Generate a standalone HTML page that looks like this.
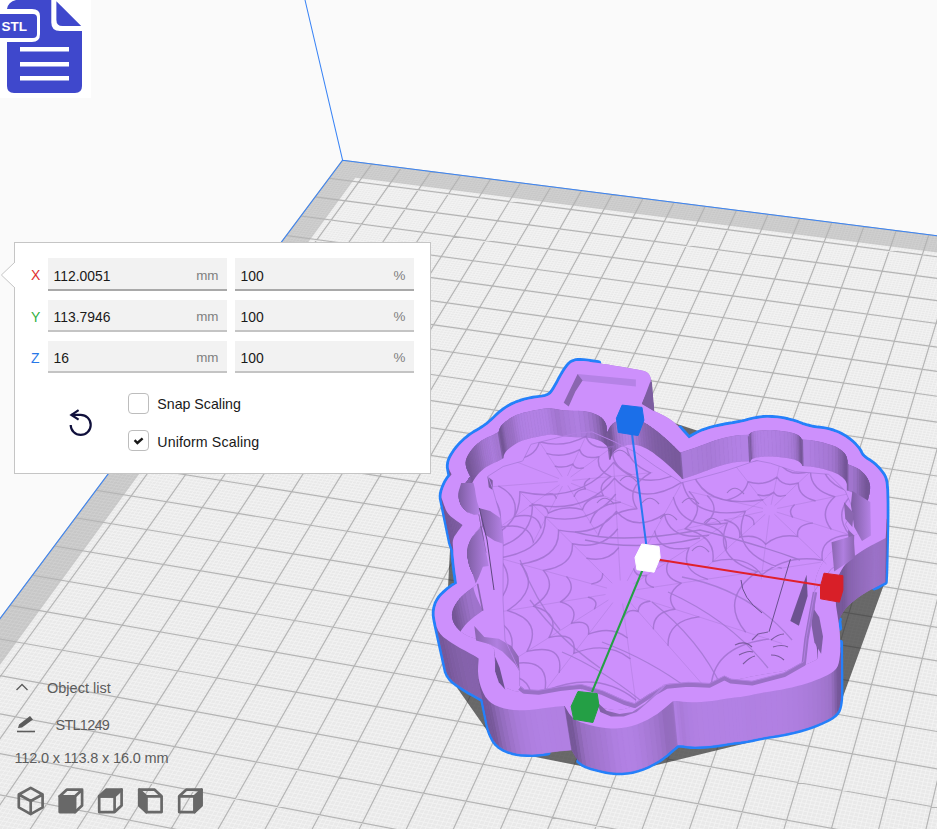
<!DOCTYPE html>
<html><head><meta charset="utf-8"><title>STL1249</title>
<style>
html,body{margin:0;padding:0}
body{width:937px;height:829px;overflow:hidden;background:#fafafa;position:relative;font-family:"Liberation Sans","DejaVu Sans",sans-serif;color:#191919}
#scene{position:absolute;left:0;top:0}
#stl{position:absolute;left:0;top:0;width:91px;height:98px;background:#fff}
#panel{position:absolute;left:14px;top:242px;width:415px;height:230px;background:#fff;border:1px solid #c5c5c5}
#arrow{position:absolute;left:0px;top:261.5px;width:15px;height:26px}
.row{position:absolute;height:33px}
.lbl{position:absolute;left:16px;font-size:14px;width:14px;text-align:left}
.fld{position:absolute;height:30.5px;background:#f2f2f2;border-bottom:2px solid #c4c4c4;font-size:13.9px;line-height:30px}
.fld span.v{position:absolute;left:5.5px;top:2.3px;color:#191919}
.fld span.u{position:absolute;right:8.5px;top:2.3px;color:#808080;font-size:13.4px}
.cb{position:absolute;width:19px;height:19px;border:1px solid #bdbdbd;border-radius:4px;background:#fff}
.cbl{position:absolute;font-size:14.2px;color:#191919;white-space:nowrap}
.ol{position:absolute;font-size:14.5px;color:#5c5c5c;white-space:nowrap}
</style></head>
<body>
<svg id="scene" width="937" height="829" viewBox="0 0 937 829">
<polygon points="342.6,160.2 1299.8,281.8 1218.5,1357.2 -297.2,1016.5" fill="#e9e9e9"/>
<path d="M345.5,160.6L-292.9,1017.5M348.5,161.0L-288.5,1018.5M351.4,161.3L-284.1,1019.5M354.3,161.7L-279.7,1020.5M357.2,162.1L-275.4,1021.5M360.2,162.4L-271.0,1022.4M363.1,162.8L-266.6,1023.4M366.0,163.2L-262.2,1024.4M368.9,163.6L-257.8,1025.4M374.8,164.3L-249.0,1027.4M377.8,164.7L-244.6,1028.4M380.7,165.0L-240.2,1029.4M383.6,165.4L-235.8,1030.4M386.6,165.8L-231.3,1031.4M389.5,166.2L-226.9,1032.3M392.5,166.5L-222.5,1033.3M395.4,166.9L-218.0,1034.3M398.4,167.3L-213.6,1035.3M404.3,168.0L-204.7,1037.3M407.2,168.4L-200.3,1038.3M410.2,168.8L-195.8,1039.3M413.1,169.2L-191.4,1040.3M416.1,169.5L-186.9,1041.3M419.0,169.9L-182.4,1042.3M422.0,170.3L-178.0,1043.3M425.0,170.7L-173.5,1044.4M427.9,171.1L-169.0,1045.4M433.9,171.8L-160.0,1047.4M436.8,172.2L-155.5,1048.4M439.8,172.6L-151.1,1049.4M442.8,172.9L-146.6,1050.4M445.8,173.3L-142.0,1051.4M448.7,173.7L-137.5,1052.4M451.7,174.1L-133.0,1053.4M454.7,174.5L-128.5,1054.5M457.7,174.8L-124.0,1055.5M463.7,175.6L-114.9,1057.5M466.7,176.0L-110.4,1058.5M469.6,176.3L-105.9,1059.5M472.6,176.7L-101.3,1060.6M475.6,177.1L-96.8,1061.6M478.6,177.5L-92.2,1062.6M481.6,177.9L-87.7,1063.6M484.6,178.3L-83.1,1064.7M487.6,178.6L-78.6,1065.7M493.6,179.4L-69.4,1067.7M496.6,179.8L-64.9,1068.8M499.6,180.2L-60.3,1069.8M502.6,180.5L-55.7,1070.8M505.7,180.9L-51.1,1071.9M508.7,181.3L-46.5,1072.9M511.7,181.7L-41.9,1073.9M514.7,182.1L-37.3,1075.0M517.7,182.5L-32.7,1076.0M523.8,183.2L-23.5,1078.1M526.8,183.6L-18.9,1079.1M529.8,184.0L-14.2,1080.1M532.8,184.4L-9.6,1081.2M535.9,184.8L-5.0,1082.2M538.9,185.1L-0.4,1083.3M541.9,185.5L4.3,1084.3M545.0,185.9L8.9,1085.4M548.0,186.3L13.6,1086.4M554.1,187.1L22.9,1088.5M557.1,187.5L27.6,1089.5M560.1,187.8L32.2,1090.6M563.2,188.2L36.9,1091.6M566.2,188.6L41.6,1092.7M569.3,189.0L46.2,1093.7M572.3,189.4L50.9,1094.8M575.4,189.8L55.6,1095.8M578.4,190.2L60.3,1096.9M584.5,190.9L69.7,1099.0M587.6,191.3L74.4,1100.1M590.7,191.7L79.1,1101.1M593.7,192.1L83.8,1102.2M596.8,192.5L88.6,1103.2M599.9,192.9L93.3,1104.3M602.9,193.3L98.0,1105.4M606.0,193.7L102.7,1106.4M609.1,194.1L107.5,1107.5M615.2,194.8L117.0,1109.6M618.3,195.2L121.7,1110.7M621.4,195.6L126.5,1111.8M624.4,196.0L131.2,1112.8M627.5,196.4L136.0,1113.9M630.6,196.8L140.8,1115.0M633.7,197.2L145.5,1116.1M636.8,197.6L150.3,1117.1M639.9,198.0L155.1,1118.2M646.1,198.8L164.7,1120.4M649.2,199.2L169.5,1121.4M652.2,199.5L174.3,1122.5M655.3,199.9L179.1,1123.6M658.4,200.3L183.9,1124.7M661.5,200.7L188.7,1125.8M664.7,201.1L193.5,1126.8M667.8,201.5L198.3,1127.9M670.9,201.9L203.2,1129.0M677.1,202.7L212.8,1131.2M680.2,203.1L217.7,1132.3M683.3,203.5L222.5,1133.4M686.4,203.9L227.4,1134.4M689.5,204.3L232.2,1135.5M692.7,204.7L237.1,1136.6M695.8,205.1L241.9,1137.7M698.9,205.5L246.8,1138.8M702.0,205.9L251.7,1139.9M708.3,206.7L261.5,1142.1M711.4,207.1L266.3,1143.2M714.6,207.5L271.2,1144.3M717.7,207.9L276.1,1145.4M720.8,208.3L281.0,1146.5M724.0,208.7L285.9,1147.6M727.1,209.1L290.9,1148.7M730.2,209.5L295.8,1149.8M733.4,209.9L300.7,1150.9M739.7,210.7L310.6,1153.1M742.8,211.1L315.5,1154.2M746.0,211.5L320.4,1155.4M749.1,211.9L325.4,1156.5M752.3,212.3L330.3,1157.6M755.5,212.7L335.3,1158.7M758.6,213.1L340.2,1159.8M761.8,213.5L345.2,1160.9M764.9,213.9L350.2,1162.0M771.3,214.7L360.1,1164.3M774.4,215.1L365.1,1165.4M777.6,215.5L370.1,1166.5M780.8,215.9L375.1,1167.6M784.0,216.3L380.1,1168.8M787.1,216.7L385.1,1169.9M790.3,217.1L390.1,1171.0M793.5,217.5L395.1,1172.1M796.7,217.9L400.1,1173.3M803.0,218.7L410.2,1175.5M806.2,219.1L415.2,1176.7M809.4,219.5L420.3,1177.8M812.6,219.9L425.3,1178.9M815.8,220.3L430.3,1180.1M819.0,220.7L435.4,1181.2M822.2,221.1L440.5,1182.3M825.4,221.5L445.5,1183.5M828.6,222.0L450.6,1184.6M835.0,222.8L460.7,1186.9M838.2,223.2L465.8,1188.0M841.4,223.6L470.9,1189.2M844.6,224.0L476.0,1190.3M847.8,224.4L481.1,1191.5M851.0,224.8L486.2,1192.6M854.3,225.2L491.3,1193.8M857.5,225.6L496.4,1194.9M860.7,226.0L501.5,1196.1M867.1,226.8L511.8,1198.4M870.4,227.3L516.9,1199.5M873.6,227.7L522.0,1200.7M876.8,228.1L527.2,1201.8M880.1,228.5L532.3,1203.0M883.3,228.9L537.5,1204.1M886.5,229.3L542.6,1205.3M889.8,229.7L547.8,1206.5M893.0,230.1L553.0,1207.6M899.5,231.0L563.3,1210.0M902.7,231.4L568.5,1211.1M906.0,231.8L573.7,1212.3M909.2,232.2L578.9,1213.5M912.5,232.6L584.1,1214.6M915.7,233.0L589.3,1215.8M919.0,233.4L594.5,1217.0M922.2,233.8L599.7,1218.1M925.5,234.3L604.9,1219.3M932.0,235.1L615.4,1221.7M935.3,235.5L620.6,1222.8M938.6,235.9L625.9,1224.0M941.8,236.3L631.1,1225.2M945.1,236.8L636.4,1226.4M948.4,237.2L641.6,1227.6M951.6,237.6L646.9,1228.7M954.9,238.0L652.2,1229.9M958.2,238.4L657.4,1231.1M964.8,239.3L668.0,1233.5M968.0,239.7L673.3,1234.7M971.3,240.1L678.6,1235.9M974.6,240.5L683.9,1237.0M977.9,240.9L689.2,1238.2M981.2,241.3L694.5,1239.4M984.5,241.8L699.8,1240.6M987.8,242.2L705.1,1241.8M991.1,242.6L710.4,1243.0M997.7,243.4L721.1,1245.4M1001.0,243.9L726.4,1246.6M1004.3,244.3L731.8,1247.8M1007.6,244.7L737.1,1249.0M1010.9,245.1L742.5,1250.2M1014.2,245.5L747.9,1251.4M1017.5,246.0L753.2,1252.6M1020.9,246.4L758.6,1253.8M1024.2,246.8L764.0,1255.1M1030.8,247.6L774.8,1257.5M1034.1,248.1L780.2,1258.7M1037.5,248.5L785.6,1259.9M1040.8,248.9L791.0,1261.1M1044.1,249.3L796.4,1262.3M1047.5,249.8L801.8,1263.5M1050.8,250.2L807.2,1264.8M1054.1,250.6L812.6,1266.0M1057.5,251.0L818.1,1267.2M1064.2,251.9L829.0,1269.7M1067.5,252.3L834.4,1270.9M1070.9,252.7L839.9,1272.1M1074.2,253.2L845.3,1273.3M1077.6,253.6L850.8,1274.6M1080.9,254.0L856.3,1275.8M1084.3,254.4L861.7,1277.0M1087.6,254.9L867.2,1278.3M1091.0,255.3L872.7,1279.5M1097.7,256.1L883.7,1282.0M1101.1,256.6L889.2,1283.2M1104.4,257.0L894.7,1284.4M1107.8,257.4L900.2,1285.7M1111.2,257.9L905.8,1286.9M1114.5,258.3L911.3,1288.2M1117.9,258.7L916.8,1289.4M1121.3,259.1L922.4,1290.6M1124.7,259.6L927.9,1291.9M1131.4,260.4L939.0,1294.4M1134.8,260.9L944.6,1295.6M1138.2,261.3L950.2,1296.9M1141.6,261.7L955.7,1298.1M1145.0,262.1L961.3,1299.4M1148.4,262.6L966.9,1300.7M1151.8,263.0L972.5,1301.9M1155.2,263.4L978.1,1303.2M1158.6,263.9L983.7,1304.4M341.3,162.0L1299.7,283.9M339.9,163.8L1299.5,286.1M338.6,165.6L1299.4,288.2M337.2,167.4L1299.2,290.4M335.9,169.2L1299.0,292.5M334.5,171.0L1298.9,294.7M333.2,172.8L1298.7,296.8M331.8,174.7L1298.5,299.0M330.4,176.5L1298.4,301.2M327.7,180.2L1298.0,305.5M326.3,182.0L1297.9,307.7M324.9,183.9L1297.7,309.9M323.6,185.7L1297.6,312.1M322.2,187.6L1297.4,314.3M320.8,189.4L1297.2,316.5M319.4,191.3L1297.0,318.8M318.0,193.2L1296.9,321.0M316.6,195.0L1296.7,323.2M313.8,198.8L1296.4,327.7M312.4,200.7L1296.2,330.0M311.0,202.6L1296.0,332.2M309.5,204.5L1295.9,334.5M308.1,206.4L1295.7,336.7M306.7,208.3L1295.5,339.0M305.3,210.2L1295.3,341.3M303.8,212.1L1295.2,343.6M302.4,214.1L1295.0,345.9M299.5,217.9L1294.6,350.5M298.1,219.9L1294.5,352.8M296.6,221.8L1294.3,355.1M295.1,223.7L1294.1,357.5M293.7,225.7L1293.9,359.8M292.2,227.7L1293.8,362.2M290.8,229.6L1293.6,364.5M289.3,231.6L1293.4,366.9M287.8,233.6L1293.2,369.2M284.8,237.5L1292.9,374.0M283.4,239.5L1292.7,376.4M281.9,241.5L1292.5,378.7M280.4,243.5L1292.3,381.1M278.9,245.5L1292.1,383.5M277.4,247.5L1292.0,386.0M275.9,249.5L1291.8,388.4M274.4,251.6L1291.6,390.8M272.8,253.6L1291.4,393.2M269.8,257.7L1291.0,398.1M268.3,259.7L1290.9,400.6M266.7,261.8L1290.7,403.0M265.2,263.8L1290.5,405.5M263.7,265.9L1290.3,408.0M262.1,267.9L1290.1,410.5M260.6,270.0L1289.9,413.0M259.0,272.1L1289.7,415.5M257.5,274.2L1289.5,418.0M254.4,278.3L1289.2,423.0M252.8,280.4L1289.0,425.5M251.2,282.5L1288.8,428.1M249.6,284.6L1288.6,430.6M248.1,286.8L1288.4,433.1M246.5,288.9L1288.2,435.7M244.9,291.0L1288.0,438.3M243.3,293.1L1287.8,440.8M241.7,295.3L1287.6,443.4M238.5,299.6L1287.2,448.6M236.9,301.7L1287.0,451.2M235.3,303.9L1286.8,453.8M233.6,306.1L1286.6,456.4M232.0,308.2L1286.4,459.1M230.4,310.4L1286.2,461.7M228.8,312.6L1286.0,464.3M227.1,314.8L1285.8,467.0M225.5,317.0L1285.6,469.7M222.2,321.4L1285.2,475.0M220.5,323.6L1285.0,477.7M218.9,325.8L1284.8,480.4M217.2,328.1L1284.6,483.1M215.5,330.3L1284.4,485.8M213.8,332.5L1284.2,488.5M212.2,334.8L1284.0,491.2M210.5,337.0L1283.8,494.0M208.8,339.3L1283.6,496.7M205.4,343.8L1283.2,502.2M203.7,346.1L1283.0,505.0M202.0,348.4L1282.7,507.8M200.3,350.7L1282.5,510.6M198.6,353.0L1282.3,513.3M196.8,355.3L1282.1,516.1M195.1,357.6L1281.9,519.0M193.4,359.9L1281.7,521.8M191.7,362.3L1281.5,524.6M188.2,366.9L1281.0,530.3M186.4,369.3L1280.8,533.2M184.7,371.6L1280.6,536.0M182.9,374.0L1280.4,538.9M181.1,376.3L1280.2,541.8M179.4,378.7L1280.0,544.7M177.6,381.1L1279.7,547.6M175.8,383.5L1279.5,550.5M174.0,385.9L1279.3,553.4M170.4,390.7L1278.9,559.3M168.6,393.1L1278.6,562.2M166.8,395.5L1278.4,565.2M165.0,397.9L1278.2,568.1M163.2,400.4L1278.0,571.1M161.4,402.8L1277.7,574.1M159.5,405.2L1277.5,577.1M157.7,407.7L1277.3,580.1M155.9,410.2L1277.0,583.1M152.2,415.1L1276.6,589.2M150.3,417.6L1276.4,592.2M148.4,420.1L1276.1,595.3M146.6,422.6L1275.9,598.4M144.7,425.1L1275.7,601.4M142.8,427.6L1275.4,604.5M140.9,430.1L1275.2,607.6M139.1,432.6L1275.0,610.7M137.2,435.2L1274.7,613.8M133.4,440.3L1274.2,620.1M131.4,442.8L1274.0,623.2M129.5,445.4L1273.8,626.4M127.6,448.0L1273.5,629.6M125.7,450.5L1273.3,632.8M123.7,453.1L1273.1,635.9M121.8,455.7L1272.8,639.1M119.9,458.3L1272.6,642.4M117.9,460.9L1272.3,645.6M114.0,466.2L1271.8,652.0M112.0,468.8L1271.6,655.3M110.0,471.5L1271.3,658.6M108.1,474.1L1271.1,661.8M106.1,476.8L1270.8,665.1M104.1,479.4L1270.6,668.4M102.1,482.1L1270.3,671.7M100.1,484.8L1270.1,675.1M98.1,487.5L1269.8,678.4M94.0,492.9L1269.3,685.1M92.0,495.6L1269.1,688.5M90.0,498.3L1268.8,691.8M87.9,501.1L1268.6,695.2M85.9,503.8L1268.3,698.6M83.8,506.6L1268.1,702.0M81.8,509.3L1267.8,705.5M79.7,512.1L1267.5,708.9M77.6,514.9L1267.3,712.3M73.4,520.5L1266.7,719.3M71.3,523.3L1266.5,722.8M69.2,526.1L1266.2,726.3M67.1,528.9L1266.0,729.8M65.0,531.7L1265.7,733.3M62.9,534.6L1265.4,736.8M60.8,537.4L1265.2,740.4M58.6,540.3L1264.9,743.9M56.5,543.1L1264.6,747.5M52.2,548.9L1264.1,754.7M50.0,551.8L1263.8,758.3M47.9,554.7L1263.5,761.9M45.7,557.6L1263.2,765.6M43.5,560.5L1263.0,769.2M41.3,563.4L1262.7,772.9M39.1,566.4L1262.4,776.5M36.9,569.3L1262.1,780.2M34.7,572.3L1261.9,783.9M30.3,578.2L1261.3,791.4M28.1,581.2L1261.0,795.1M25.8,584.2L1260.7,798.9M23.6,587.2L1260.4,802.6M21.3,590.2L1260.2,806.4M19.1,593.2L1259.9,810.2M16.8,596.3L1259.6,814.0M14.5,599.3L1259.3,817.8M12.2,602.4L1259.0,821.7M7.7,608.5L1258.4,829.4M5.4,611.6L1258.1,833.3M3.0,614.7L1257.8,837.2M0.7,617.8L1257.5,841.1M-1.6,620.9L1257.2,845.0M-3.9,624.0L1256.9,848.9M-6.3,627.1L1256.6,852.9M-8.6,630.3L1256.3,856.9M-11.0,633.4L1256.0,860.8M-15.7,639.8L1255.4,868.8M-18.1,643.0L1255.1,872.9M-20.5,646.2L1254.8,876.9M-22.9,649.4L1254.5,881.0M-25.3,652.6L1254.2,885.0M-27.7,655.8L1253.9,889.1M-30.1,659.1L1253.6,893.2M-32.6,662.3L1253.3,897.4M-35.0,665.6L1253.0,901.5M-39.9,672.1L1252.3,909.8M-42.3,675.4L1252.0,914.0M-44.8,678.7L1251.7,918.2M-47.3,682.0L1251.4,922.4M-49.8,685.4L1251.1,926.6M-52.3,688.7L1250.7,930.9M-54.8,692.1L1250.4,935.1M-57.3,695.4L1250.1,939.4M-59.8,698.8L1249.8,943.7M-64.9,705.6L1249.1,952.4M-67.4,709.0L1248.8,956.7M-70.0,712.4L1248.5,961.1M-72.6,715.8L1248.1,965.4M-75.1,719.3L1247.8,969.8M-77.7,722.7L1247.5,974.3M-80.3,726.2L1247.1,978.7M-82.9,729.7L1246.8,983.1M-85.5,733.2L1246.4,987.6M-90.8,740.2L1245.8,996.6M-93.4,743.7L1245.4,1001.1M-96.0,747.3L1245.1,1005.6M-98.7,750.8L1244.7,1010.2M-101.4,754.4L1244.4,1014.8M-104.0,758.0L1244.0,1019.4M-106.7,761.6L1243.7,1024.0M-109.4,765.2L1243.3,1028.6M-112.1,768.8L1243.0,1033.3M-117.5,776.1L1242.3,1042.6M-120.3,779.7L1241.9,1047.3M-123.0,783.4L1241.6,1052.0M-125.8,787.1L1241.2,1056.8M-128.5,790.8L1240.9,1061.6M-131.3,794.5L1240.5,1066.3M-134.1,798.2L1240.1,1071.1M-136.9,801.9L1239.8,1076.0M-139.7,805.7L1239.4,1080.8M-145.3,813.2L1238.7,1090.5M-148.1,817.0L1238.3,1095.4M-151.0,820.8L1237.9,1100.4M-153.8,824.6L1237.5,1105.3M-156.7,828.4L1237.2,1110.3M-159.6,832.3L1236.8,1115.3M-162.4,836.1L1236.4,1120.3M-165.3,840.0L1236.0,1125.3M-168.2,843.9L1235.6,1130.3M-174.1,851.7L1234.9,1140.5M-177.0,855.7L1234.5,1145.6M-180.0,859.6L1234.1,1150.7M-182.9,863.6L1233.7,1155.9M-185.9,867.5L1233.3,1161.1M-188.9,871.5L1232.9,1166.3M-191.9,875.5L1232.5,1171.5M-194.9,879.5L1232.1,1176.7M-197.9,883.6L1231.7,1182.0" stroke="#f4f4f4" stroke-width="1" fill="none" opacity="0.8"/>
<polygon points="342.6,160.2 1299.8,281.8 1298.5,299.0 355.4,177.7 -262.2,1024.4 -297.2,1016.5" fill="#000" fill-opacity="0.145"/>
<path d="M342.6,160.2L-297.2,1016.5M371.9,163.9L-253.4,1026.4M401.3,167.7L-209.2,1036.3M430.9,171.4L-164.5,1046.4M460.7,175.2L-119.5,1056.5M490.6,179.0L-74.0,1066.7M520.7,182.8L-28.1,1077.0M551.0,186.7L18.2,1087.4M581.5,190.6L65.0,1098.0M612.1,194.5L112.2,1108.6M643.0,198.4L159.9,1119.3M674.0,202.3L208.0,1130.1M705.2,206.3L256.6,1141.0M736.5,210.3L305.6,1152.0M768.1,214.3L355.1,1163.2M799.8,218.3L405.2,1174.4M831.8,222.4L455.7,1185.8M863.9,226.4L506.7,1197.2M896.2,230.5L558.2,1208.8M928.8,234.7L610.2,1220.5M961.5,238.8L662.7,1232.3M994.4,243.0L715.8,1244.2M1027.5,247.2L769.4,1256.3M1060.8,251.5L823.5,1268.4M1094.3,255.7L878.2,1280.7M1128.1,260.0L933.5,1293.1M1162.0,264.3L989.3,1305.7M1196.1,268.6L1045.7,1318.4M1230.5,273.0L1102.7,1331.2M1265.1,277.4L1160.3,1344.1M1299.8,281.8L1218.5,1357.2M342.6,160.2L1299.8,281.8M329.1,178.3L1298.2,303.3M315.2,196.9L1296.5,325.5M300.9,216.0L1294.8,348.2M286.3,235.5L1293.0,371.6M271.3,255.6L1291.2,395.7M255.9,276.2L1289.4,420.5M240.1,297.4L1287.4,446.0M223.8,319.2L1285.4,472.3M207.1,341.6L1283.4,499.5M189.9,364.6L1281.3,527.4M172.2,388.3L1279.1,556.3M154.0,412.6L1276.8,586.2M135.3,437.7L1274.5,617.0M116.0,463.6L1272.1,648.8M96.1,490.2L1269.6,681.7M75.5,517.7L1267.0,715.8M54.4,546.0L1264.3,751.1M32.5,575.2L1261.6,787.6M10.0,605.4L1258.7,825.5M-13.3,636.6L1255.7,864.8M-37.4,668.8L1252.6,905.6M-62.3,702.2L1249.4,948.0M-88.1,736.7L1246.1,992.1M-114.8,772.4L1242.6,1037.9M-142.5,809.4L1239.0,1085.7M-171.2,847.8L1235.3,1135.4M-200.9,887.6L1231.3,1187.3M-231.8,929.0L1227.2,1241.4M-263.9,971.9L1223.0,1298.0M-297.2,1016.5L1218.5,1357.2" stroke="#b4b4b4" stroke-width="1.15" fill="none"/>
<path d="M1299.8,281.8L342.6,160.2L-297.2,1016.5M342.6,160.2L305,0" stroke="#3a84f5" stroke-width="1.05" fill="none"/>
<g id="model">
<polygon points="598.3,405.8 593.2,405.0 589.0,404.5 585.7,404.2 583.3,404.2 581.8,404.5 580.4,404.8 579.1,405.3 577.9,405.8 576.8,406.4 513.3,452.2 510.4,454.3 476.2,481.1 473.4,483.5 470.6,486.2 467.9,489.0 465.5,492.0 463.3,495.1 461.2,498.3 459.6,501.3 458.4,504.0 457.7,506.6 451.4,534.7 450.8,537.5 450.5,540.0 444.4,655.8 444.3,657.7 444.4,659.4 444.7,661.7 445.2,664.4 445.8,667.7 446.6,671.4 448.1,674.8 450.2,678.0 494.4,740.9 496.8,743.9 499.8,746.6 503.4,748.8 507.6,750.7 512.0,752.1 516.7,753.2 606.2,771.1 611.4,771.9 616.6,772.3 621.8,772.3 627.0,771.9 632.2,771.1 637.4,769.8 793.4,731.4 798.7,730.1 803.6,728.7 808.3,727.2 812.7,725.7 816.9,724.1 820.9,722.4 824.6,720.7 828.2,718.9 831.6,717.0 834.3,715.0 836.5,712.7 838.0,710.2 884.9,582.1 885.3,573.1 885.5,567.7 885.6,562.9 885.7,557.8 885.7,552.3 885.7,547.1 885.6,542.2 885.5,537.6 885.4,533.4 885.1,529.7 884.8,526.5 884.2,523.9 883.6,521.8 882.5,519.5 881.0,517.2 879.1,514.6 876.7,511.9 854.6,488.9 852.0,486.3 849.0,483.7 845.7,481.3 841.9,479.0 837.7,476.9 833.2,475.1 648.1,414.4 645.8,413.8 642.5,413.1 638.2,412.3 632.8,411.3 627.6,410.4 622.5,409.6 617.7,408.8 613.0,408.0 608.3,407.3 603.4,406.5 598.3,405.8" fill="#2a2a2a" fill-opacity="0.68"/>
<path d="M448.0,479.0L446.1,482.0L444.8,484.7L443.6,487.6L442.5,490.8L441.8,493.7L441.6,496.2L441.7,498.3L450.7,542.2L451.2,544.0L451.9,546.0L452.7,548.3L453.1,549.5L453.2,549.7L453.4,552.5L453.6,555.5L453.9,558.6L454.2,561.7L454.6,564.9L454.9,568.1L455.3,571.2L455.7,574.2L456.2,577.6L457.0,583.5L453.0,586.1L450.7,587.8L448.7,589.3L446.7,591.0L444.5,592.9L442.6,594.8L440.9,596.6L439.5,598.4L438.3,600.3L437.3,602.1L436.4,604.0L435.8,606.0L435.2,608.0L434.9,609.9L434.7,611.8L434.7,613.7L434.7,615.4L435.0,617.7L435.5,620.5L436.1,623.7L436.9,627.4L446.6,671.4L448.1,674.8L450.2,678.0L452.9,680.9L456.3,683.5L460.2,686.2L464.5,689.0L469.3,691.9L474.5,694.8L478.8,697.2L482.0,699.0L483.0,699.6L487.8,722.9L488.6,726.6L489.6,730.3L490.9,733.9L492.5,737.4L494.4,740.9L496.8,743.9L499.8,746.6L503.4,748.8L507.6,750.7L512.0,752.1L516.7,753.2L521.6,753.9L526.8,754.1L532.0,754.2L537.2,753.9L542.4,753.4L547.7,752.6M579.3,761.3L582.6,763.8L586.7,765.8L591.3,767.4L596.2,768.8L601.1,770.0L606.2,771.1L611.4,771.9L616.6,772.3L621.8,772.3L627.0,771.9L632.2,771.1L637.4,769.8L642.6,768.1L647.8,765.9L653.0,763.2L657.9,760.5L662.3,757.5L666.3,754.5L669.9,751.3L672.8,748.8L675.1,746.9L676.5,745.7L677.3,745.1L678.8,744.9L680.8,744.9L683.6,745.1L687.0,745.7L690.8,746.0L695.1,746.2L699.8,746.1L705.0,745.8L710.2,745.4L715.4,744.8L720.7,744.1L725.9,743.2L730.4,742.5L734.3,741.9L737.6,741.5L740.2,741.3L743.4,740.8L747.3,740.2L751.8,739.3L757.0,738.2L762.2,737.2L767.4,736.2L772.6,735.4L777.8,734.6L783.0,733.7L788.2,732.6L793.4,731.4L798.7,730.1L803.6,728.7L808.3,727.2L812.7,725.7L816.9,724.1L820.9,722.4L824.6,720.7L828.2,718.9L831.6,717.0L834.3,715.0L836.5,712.7L838.0,710.2L838.9,707.6L839.6,704.4L840.1,700.6L840.4,696.4L840.5,691.6L840.2,647.5L840.2,642.7M839.2,628.2L838.7,623.5L838.4,621.3L838.9,619.7M874.5,587.5L876.4,586.6L878.3,585.6L880.7,584.3L884.9,582.1L885.3,573.1L885.5,567.7L885.6,562.9L886.5,518.9L886.5,513.8L886.5,508.3L886.5,503.1L886.4,498.2L886.3,493.6L886.2,489.4L885.9,485.7L885.5,482.5L885.0,479.9L884.3,477.8L883.2,475.6L881.7,473.2L879.7,470.7L877.3,468.0L874.8,465.5L872.1,463.3L869.3,461.2L866.3,459.4L863.9,457.5L862.0,455.7L860.7,453.8L859.9,451.9L858.6,449.8L856.9,447.6L854.7,445.1L852.1,442.4L849.0,439.9L845.6,437.5L841.7,435.2L837.4,433.1L832.9,431.4L828.1,430.0L823.0,429.1L817.7,428.5L812.5,427.7L807.4,426.4L802.5,424.9L797.6,423.1L792.7,421.5L787.6,420.2L782.4,419.1L777.1,418.3L772.0,417.9L767.2,417.8L762.7,418.0L758.4,418.7L754.6,419.3L751.2,420.0L748.3,420.7L745.9,421.5L742.4,422.3L738.0,423.2L732.6,424.2L726.2,425.2L720.3,426.4L715.0,427.6L710.2,428.8L705.9,430.2L702.0,431.6L698.6,433.1L694.9,435.0L688.9,438.6L684.1,433.2L681.6,430.5L680.0,428.6M598.3,363.1L593.1,362.4L587.9,361.6L583.6,361.1L580.2,360.9L577.8,360.9L576.2,361.1L574.8,361.5L573.5,361.9L572.3,362.4L571.1,363.1L569.8,364.2L568.4,365.7L566.9,367.7L565.1,370.2L563.4,373.0L561.6,376.1L559.7,379.5L557.8,383.2L555.9,386.5L554.2,389.4L552.5,391.9L550.9,393.9L548.6,395.6L545.6,396.8L541.9,397.6L537.6,398.1L533.2,398.7L528.9,399.6L524.6,400.6L520.3,401.9L516.3,403.3L512.6,404.9L509.2,406.7L506.2,408.6L503.2,410.7L500.3,413.0L497.5,415.5L494.9,418.1L492.3,420.5L489.9,422.6L487.7,424.5L485.5,426.1L483.1,427.8L480.4,429.5L477.5,431.2L474.3,433.1L471.2,435.1L468.1,437.4L465.2,439.8L462.3,442.5L459.6,445.3L457.1,448.2L454.8,451.3L452.7,454.5L451.0,457.5L449.8,460.3L449.1,462.8L448.8,465.2L448.8,467.3L449.1,469.1L450.4,475.8L448.0,479.0" fill="none" stroke="#2480fa" stroke-width="5.8" stroke-linejoin="round" stroke-linecap="round"/>
<polygon points="448.0,479.0 446.1,482.0 444.8,484.7 443.6,487.6 442.5,490.8 441.8,493.7 441.6,496.2 441.7,498.3 450.7,542.2 451.2,544.0 451.9,546.0 452.7,548.3 453.1,549.5 453.2,549.7 453.4,552.5 453.6,555.5 453.9,558.6 454.2,561.7 454.6,564.9 454.9,568.1 455.3,571.2 455.7,574.2 456.2,577.6 457.0,583.5 453.0,586.1 450.7,587.8 448.7,589.3 446.7,591.0 444.5,592.9 442.6,594.8 440.9,596.6 439.5,598.4 438.3,600.3 437.3,602.1 436.4,604.0 435.8,606.0 435.2,608.0 434.9,609.9 434.7,611.8 434.7,613.7 434.7,615.4 435.0,617.7 435.5,620.5 436.1,623.7 436.9,627.4 446.6,671.4 448.1,674.8 450.2,678.0 452.9,680.9 456.3,683.5 460.2,686.2 464.5,689.0 469.3,691.9 474.5,694.8 478.8,697.2 482.0,699.0 483.0,699.6 487.8,722.9 488.6,726.6 489.6,730.3 490.9,733.9 492.5,737.4 494.4,740.9 496.8,743.9 499.8,746.6 503.4,748.8 507.6,750.7 512.0,752.1 516.7,753.2 521.6,753.9 526.8,754.1 532.0,754.2 537.2,753.9 542.4,753.4 547.7,752.6 552.6,751.9 557.2,751.3 562.6,750.7 571.7,749.9 576.1,757.5 579.3,761.3 582.6,763.8 586.7,765.8 591.3,767.4 596.2,768.8 601.1,770.0 606.2,771.1 611.4,771.9 616.6,772.3 621.8,772.3 627.0,771.9 632.2,771.1 637.4,769.8 642.6,768.1 647.8,765.9 653.0,763.2 657.9,760.5 662.3,757.5 666.3,754.5 669.9,751.3 672.8,748.8 675.1,746.9 676.5,745.7 677.3,745.1 678.8,744.9 680.8,744.9 683.6,745.1 687.0,745.7 690.8,746.0 695.1,746.2 699.8,746.1 705.0,745.8 710.2,745.4 715.4,744.8 720.7,744.1 725.9,743.2 730.4,742.5 734.3,741.9 737.6,741.5 740.2,741.3 743.4,740.8 747.3,740.2 751.8,739.3 757.0,738.2 762.2,737.2 767.4,736.2 772.6,735.4 777.8,734.6 783.0,733.7 788.2,732.6 793.4,731.4 798.7,730.1 803.6,728.7 808.3,727.2 812.7,725.7 816.9,724.1 820.9,722.4 824.6,720.7 828.2,718.9 831.6,717.0 834.3,715.0 836.5,712.7 838.0,710.2 838.9,707.6 839.6,704.4 840.1,700.6 840.4,696.4 840.5,691.6 840.2,647.5 840.2,642.7 840.0,637.9 839.7,633.1 839.2,628.2 838.7,623.5 838.4,621.3 838.9,619.7 840.3,616.6 841.9,613.6 843.7,610.9 845.4,608.5 847.3,606.5 849.1,604.7 851.1,603.0 853.1,601.3 855.1,599.7 857.2,598.1 859.4,596.5 861.6,595.0 863.9,593.5 866.3,592.1 868.5,590.7 870.7,589.5 872.7,588.5 874.5,587.5 876.4,586.6 878.3,585.6 880.7,584.3 884.9,582.1 885.3,573.1 885.5,567.7 885.6,562.9 886.5,518.9 886.5,513.8 886.5,508.3 886.5,503.1 886.4,498.2 886.3,493.6 886.2,489.4 885.9,485.7 885.5,482.5 885.0,479.9 884.3,477.8 883.2,475.6 881.7,473.2 879.7,470.7 877.3,468.0 874.8,465.5 872.1,463.3 869.3,461.2 866.3,459.4 863.9,457.5 862.0,455.7 860.7,453.8 859.9,451.9 858.6,449.8 856.9,447.6 854.7,445.1 852.1,442.4 849.0,439.9 845.6,437.5 841.7,435.2 837.4,433.1 832.9,431.4 828.1,430.0 823.0,429.1 817.7,428.5 812.5,427.7 807.4,426.4 802.5,424.9 797.6,423.1 792.7,421.5 787.6,420.2 782.4,419.1 777.1,418.3 772.0,417.9 767.2,417.8 762.7,418.0 758.4,418.7 754.6,419.3 751.2,420.0 748.3,420.7 745.9,421.5 742.4,422.3 738.0,423.2 732.6,424.2 726.2,425.2 720.3,426.4 715.0,427.6 710.2,428.8 705.9,430.2 702.0,431.6 698.6,433.1 694.9,435.0 688.9,438.6 684.1,433.2 681.6,430.5 680.0,428.6 678.7,427.0 677.6,425.6 676.1,424.2 674.3,422.6 672.0,420.8 669.4,419.0 666.7,417.2 663.9,415.7 661.0,414.2 658.0,412.8 655.1,411.4 653.9,410.7 650.9,379.6 650.6,377.9 650.1,376.5 649.5,375.3 648.9,374.2 648.1,373.3 647.2,372.6 646.3,371.9 645.1,371.4 643.9,370.9 641.6,370.4 638.2,369.7 633.8,368.9 628.2,367.9 622.9,367.0 617.8,366.2 612.9,365.4 608.1,364.6 603.2,363.9 598.3,363.1 593.1,362.4 587.9,361.6 583.6,361.1 580.2,360.9 577.8,360.9 576.2,361.1 574.8,361.5 573.5,361.9 572.3,362.4 571.1,363.1 569.8,364.2 568.4,365.7 566.9,367.7 565.1,370.2 563.4,373.0 561.6,376.1 559.7,379.5 557.8,383.2 555.9,386.5 554.2,389.4 552.5,391.9 550.9,393.9 548.6,395.6 545.6,396.8 541.9,397.6 537.6,398.1 533.2,398.7 528.9,399.6 524.6,400.6 520.3,401.9 516.3,403.3 512.6,404.9 509.2,406.7 506.2,408.6 503.2,410.7 500.3,413.0 497.5,415.5 494.9,418.1 492.3,420.5 489.9,422.6 487.7,424.5 485.5,426.1 483.1,427.8 480.4,429.5 477.5,431.2 474.3,433.1 471.2,435.1 468.1,437.4 465.2,439.8 462.3,442.5 459.6,445.3 457.1,448.2 454.8,451.3 452.7,454.5 451.0,457.5 449.8,460.3 449.1,462.8 448.8,465.2 448.8,467.3 449.1,469.1 450.4,475.8 448.0,479.0" fill="#a87bd9"/>
<polygon points="650.9,379.6 650.6,382.1 654.7,425.6 655.0,423.1" fill="#765898" stroke="#765898" stroke-width="0.6"/>
<polygon points="650.6,382.1 649.6,385.6 653.7,429.1 654.7,425.6" fill="#765898" stroke="#765898" stroke-width="0.6"/>
<polygon points="649.6,385.6 647.3,391.4 651.5,434.9 653.7,429.1" fill="#765898" stroke="#765898" stroke-width="0.6"/>
<polygon points="647.3,391.4 641.9,403.4 646.2,447.0 651.5,434.9" fill="#765898" stroke="#765898" stroke-width="0.6"/>
<polygon points="449.8,471.1 449.1,469.1 457.7,513.0 458.4,514.9" fill="#765898" stroke="#765898" stroke-width="0.6"/>
<polygon points="451.6,474.2 449.8,471.1 458.4,514.9 460.2,518.0" fill="#765898" stroke="#765898" stroke-width="0.6"/>
<polygon points="442.3,500.1 441.7,498.3 450.7,542.2 451.2,544.0" fill="#765898" stroke="#765898" stroke-width="0.6"/>
<polygon points="443.0,502.1 442.3,500.1 451.2,544.0 451.9,546.0" fill="#765898" stroke="#765898" stroke-width="0.6"/>
<polygon points="443.8,504.4 443.0,502.1 451.9,546.0 452.7,548.3" fill="#765898" stroke="#765898" stroke-width="0.6"/>
<polygon points="444.7,506.8 443.8,504.4 452.7,548.3 453.6,550.7" fill="#765898" stroke="#765898" stroke-width="0.6"/>
<polygon points="445.7,509.5 444.7,506.8 453.6,550.7 454.6,553.4" fill="#765898" stroke="#765898" stroke-width="0.6"/>
<polygon points="447.0,511.9 445.7,509.5 454.6,553.4 455.9,555.8" fill="#765898" stroke="#765898" stroke-width="0.6"/>
<polygon points="448.5,514.0 447.0,511.9 455.9,555.8 457.4,558.0" fill="#765898" stroke="#765898" stroke-width="0.6"/>
<polygon points="450.3,515.9 448.5,514.0 457.4,558.0 459.1,559.8" fill="#765898" stroke="#765898" stroke-width="0.6"/>
<polygon points="452.2,517.5 450.3,515.9 459.1,559.8 461.1,561.4" fill="#785a9b" stroke="#785a9b" stroke-width="0.6"/>
<polygon points="454.2,519.0 452.2,517.5 461.1,561.4 463.0,562.9" fill="#795a9c" stroke="#795a9c" stroke-width="0.6"/>
<polygon points="456.1,520.4 454.2,519.0 463.0,562.9 464.8,564.4" fill="#7b5b9e" stroke="#7b5b9e" stroke-width="0.6"/>
<polygon points="886.5,518.9 886.3,523.6 885.5,567.7 885.6,562.9" fill="#765898" stroke="#765898" stroke-width="0.6"/>
<polygon points="458.4,522.1 456.1,520.4 464.8,564.4 467.1,566.0" fill="#7c5ca0" stroke="#7c5ca0" stroke-width="0.6"/>
<polygon points="462.6,524.9 458.4,522.1 467.1,566.0 471.2,568.8" fill="#7e5da2" stroke="#7e5da2" stroke-width="0.6"/>
<polygon points="886.3,523.6 886.2,529.0 885.3,573.1 885.5,567.7" fill="#765898" stroke="#765898" stroke-width="0.6"/>
<polygon points="886.2,529.0 885.7,538.0 884.9,582.1 885.3,573.1" fill="#765898" stroke="#765898" stroke-width="0.6"/>
<polygon points="885.7,538.0 881.4,540.3 880.7,584.3 884.9,582.1" fill="#9970c5" stroke="#9970c5" stroke-width="0.6"/>
<polygon points="881.4,540.3 879.0,541.5 878.3,585.6 880.7,584.3" fill="#9a70c5" stroke="#9a70c5" stroke-width="0.6"/>
<polygon points="879.0,541.5 877.0,542.5 876.4,586.6 878.3,585.6" fill="#9a71c6" stroke="#9a71c6" stroke-width="0.6"/>
<polygon points="877.0,542.5 875.1,543.4 874.5,587.5 876.4,586.6" fill="#9b71c7" stroke="#9b71c7" stroke-width="0.6"/>
<polygon points="875.1,543.4 873.2,544.4 872.7,588.5 874.5,587.5" fill="#9b72c7" stroke="#9b72c7" stroke-width="0.6"/>
<polygon points="873.2,544.4 871.1,545.5 870.7,589.5 872.7,588.5" fill="#9970c5" stroke="#9970c5" stroke-width="0.6"/>
<polygon points="871.1,545.5 869.0,546.7 868.5,590.7 870.7,589.5" fill="#986fc3" stroke="#986fc3" stroke-width="0.6"/>
<polygon points="869.0,546.7 866.7,548.0 866.3,592.1 868.5,590.7" fill="#966ec1" stroke="#966ec1" stroke-width="0.6"/>
<polygon points="866.7,548.0 864.2,549.4 863.9,593.5 866.3,592.1" fill="#956dbf" stroke="#956dbf" stroke-width="0.6"/>
<polygon points="864.2,549.4 861.9,550.9 861.6,595.0 863.9,593.5" fill="#936cbd" stroke="#936cbd" stroke-width="0.6"/>
<polygon points="861.9,550.9 859.6,552.4 859.4,596.5 861.6,595.0" fill="#916bbb" stroke="#916bbb" stroke-width="0.6"/>
<polygon points="859.6,552.4 857.4,554.0 857.2,598.1 859.4,596.5" fill="#8f69b8" stroke="#8f69b8" stroke-width="0.6"/>
<polygon points="857.4,554.0 855.2,555.6 855.1,599.7 857.2,598.1" fill="#8d68b5" stroke="#8d68b5" stroke-width="0.6"/>
<polygon points="855.2,555.6 853.1,557.2 853.1,601.3 855.1,599.7" fill="#8b67b3" stroke="#8b67b3" stroke-width="0.6"/>
<polygon points="853.1,557.2 851.1,558.9 851.1,603.0 853.1,601.3" fill="#8965b1" stroke="#8965b1" stroke-width="0.6"/>
<polygon points="851.1,558.9 849.1,560.6 849.1,604.7 851.1,603.0" fill="#8864ae" stroke="#8864ae" stroke-width="0.6"/>
<polygon points="849.1,560.6 847.2,562.4 847.3,606.5 849.1,604.7" fill="#8663ac" stroke="#8663ac" stroke-width="0.6"/>
<polygon points="847.2,562.4 845.3,564.4 845.4,608.5 847.3,606.5" fill="#7f5ea3" stroke="#7f5ea3" stroke-width="0.6"/>
<polygon points="845.3,564.4 843.5,566.8 843.7,610.9 845.4,608.5" fill="#795a9c" stroke="#795a9c" stroke-width="0.6"/>
<polygon points="843.5,566.8 841.8,569.5 841.9,613.6 843.7,610.9" fill="#765898" stroke="#765898" stroke-width="0.6"/>
<polygon points="841.8,569.5 840.1,572.5 840.3,616.6 841.9,613.6" fill="#765898" stroke="#765898" stroke-width="0.6"/>
<polygon points="840.1,572.5 838.7,575.6 838.9,619.7 840.3,616.6" fill="#765898" stroke="#765898" stroke-width="0.6"/>
<polygon points="838.7,575.6 837.6,578.7 837.9,622.8 838.9,619.7" fill="#765898" stroke="#765898" stroke-width="0.6"/>
<polygon points="837.6,578.7 836.8,581.9 837.1,626.0 837.9,622.8" fill="#765898" stroke="#765898" stroke-width="0.6"/>
<polygon points="836.8,581.9 836.3,585.1 836.6,629.2 837.1,626.0" fill="#765898" stroke="#765898" stroke-width="0.6"/>
<polygon points="836.3,585.1 836.0,588.4 836.3,632.5 836.6,629.2" fill="#765898" stroke="#765898" stroke-width="0.6"/>
<polygon points="836.0,588.4 835.7,591.7 836.0,635.9 836.3,632.5" fill="#765898" stroke="#765898" stroke-width="0.6"/>
<polygon points="835.7,591.7 835.6,595.1 835.9,639.2 836.0,635.9" fill="#765898" stroke="#765898" stroke-width="0.6"/>
<polygon points="835.6,595.1 835.6,598.5 835.9,642.6 835.9,639.2" fill="#765898" stroke="#765898" stroke-width="0.6"/>
<polygon points="438.4,630.9 436.9,627.4 446.6,671.4 448.1,674.8" fill="#765898" stroke="#765898" stroke-width="0.6"/>
<polygon points="440.5,634.0 438.4,630.9 448.1,674.8 450.2,678.0" fill="#765898" stroke="#765898" stroke-width="0.6"/>
<polygon points="443.3,636.9 440.5,634.0 450.2,678.0 452.9,680.9" fill="#765898" stroke="#765898" stroke-width="0.6"/>
<polygon points="446.8,639.6 443.3,636.9 452.9,680.9 456.3,683.5" fill="#7b5b9e" stroke="#7b5b9e" stroke-width="0.6"/>
<polygon points="450.7,642.3 446.8,639.6 456.3,683.5 460.2,686.2" fill="#7e5da2" stroke="#7e5da2" stroke-width="0.6"/>
<polygon points="455.1,645.0 450.7,642.3 460.2,686.2 464.5,689.0" fill="#805fa5" stroke="#805fa5" stroke-width="0.6"/>
<polygon points="460.0,647.9 455.1,645.0 464.5,689.0 469.3,691.9" fill="#8361a8" stroke="#8361a8" stroke-width="0.6"/>
<polygon points="465.4,650.8 460.0,647.9 469.3,691.9 474.5,694.8" fill="#8562ab" stroke="#8562ab" stroke-width="0.6"/>
<polygon points="840.2,647.5 840.2,652.3 840.4,696.4 840.5,691.6" fill="#765898" stroke="#765898" stroke-width="0.6"/>
<polygon points="469.7,653.2 465.4,650.8 474.5,694.8 478.8,697.2" fill="#8562ab" stroke="#8562ab" stroke-width="0.6"/>
<polygon points="473.1,655.1 469.7,653.2 478.8,697.2 482.0,699.0" fill="#8562ab" stroke="#8562ab" stroke-width="0.6"/>
<polygon points="840.2,652.3 839.8,656.6 840.1,700.6 840.4,696.4" fill="#765898" stroke="#765898" stroke-width="0.6"/>
<polygon points="475.7,656.6 473.1,655.1 482.0,699.0 484.6,700.6" fill="#8462aa" stroke="#8462aa" stroke-width="0.6"/>
<polygon points="478.7,658.4 475.7,656.6 484.6,700.6 487.6,702.4" fill="#8361a8" stroke="#8361a8" stroke-width="0.6"/>
<polygon points="839.8,656.6 839.3,660.3 839.6,704.4 840.1,700.6" fill="#765898" stroke="#765898" stroke-width="0.6"/>
<polygon points="839.3,660.3 838.6,663.5 838.9,707.6 839.6,704.4" fill="#765898" stroke="#765898" stroke-width="0.6"/>
<polygon points="838.6,663.5 837.7,666.2 838.0,710.2 838.9,707.6" fill="#765898" stroke="#765898" stroke-width="0.6"/>
<polygon points="837.7,666.2 836.1,668.7 836.5,712.7 838.0,710.2" fill="#765899" stroke="#765899" stroke-width="0.6"/>
<polygon points="836.1,668.7 833.9,670.9 834.3,715.0 836.5,712.7" fill="#8361a9" stroke="#8361a9" stroke-width="0.6"/>
<polygon points="833.9,670.9 831.1,673.0 831.6,717.0 834.3,715.0" fill="#916bba" stroke="#916bba" stroke-width="0.6"/>
<polygon points="831.1,673.0 827.7,674.9 828.2,718.9 831.6,717.0" fill="#9d72c9" stroke="#9d72c9" stroke-width="0.6"/>
<polygon points="827.7,674.9 824.0,676.7 824.6,720.7 828.2,718.9" fill="#a075cd" stroke="#a075cd" stroke-width="0.6"/>
<polygon points="824.0,676.7 820.2,678.4 820.9,722.4 824.6,720.7" fill="#a376d0" stroke="#a376d0" stroke-width="0.6"/>
<polygon points="820.2,678.4 816.1,680.1 816.9,724.1 820.9,722.4" fill="#a578d4" stroke="#a578d4" stroke-width="0.6"/>
<polygon points="479.6,682.7 478.8,679.0 487.8,722.9 488.6,726.6" fill="#765898" stroke="#765898" stroke-width="0.6"/>
<polygon points="816.1,680.1 811.8,681.7 812.7,725.7 816.9,724.1" fill="#a77ad6" stroke="#a77ad6" stroke-width="0.6"/>
<polygon points="811.8,681.7 807.3,683.2 808.3,727.2 812.7,725.7" fill="#a97bd9" stroke="#a97bd9" stroke-width="0.6"/>
<polygon points="807.3,683.2 802.5,684.7 803.6,728.7 808.3,727.2" fill="#ab7cdb" stroke="#ab7cdb" stroke-width="0.6"/>
<polygon points="480.7,686.4 479.6,682.7 488.6,726.6 489.6,730.3" fill="#765898" stroke="#765898" stroke-width="0.6"/>
<polygon points="802.5,684.7 797.4,686.1 798.7,730.1 803.6,728.7" fill="#ad7ddd" stroke="#ad7ddd" stroke-width="0.6"/>
<polygon points="797.4,686.1 792.0,687.4 793.4,731.4 798.7,730.1" fill="#ae7edf" stroke="#ae7edf" stroke-width="0.6"/>
<polygon points="792.0,687.4 786.7,688.6 788.2,732.6 793.4,731.4" fill="#af7fe0" stroke="#af7fe0" stroke-width="0.6"/>
<polygon points="482.0,690.0 480.7,686.4 489.6,730.3 490.9,733.9" fill="#765898" stroke="#765898" stroke-width="0.6"/>
<polygon points="786.7,688.6 781.3,689.7 783.0,733.7 788.2,732.6" fill="#b080e1" stroke="#b080e1" stroke-width="0.6"/>
<polygon points="781.3,689.7 776.0,690.6 777.8,734.6 783.0,733.7" fill="#b180e2" stroke="#b180e2" stroke-width="0.6"/>
<polygon points="776.0,690.6 770.7,691.4 772.6,735.4 777.8,734.6" fill="#b180e3" stroke="#b180e3" stroke-width="0.6"/>
<polygon points="483.6,693.5 482.0,690.0 490.9,733.9 492.5,737.4" fill="#765898" stroke="#765898" stroke-width="0.6"/>
<polygon points="770.7,691.4 765.4,692.3 767.4,736.2 772.6,735.4" fill="#b180e3" stroke="#b180e3" stroke-width="0.6"/>
<polygon points="765.4,692.3 760.0,693.2 762.2,737.2 767.4,736.2" fill="#b180e2" stroke="#b180e2" stroke-width="0.6"/>
<polygon points="760.0,693.2 754.7,694.3 757.0,738.2 762.2,737.2" fill="#b180e2" stroke="#b180e2" stroke-width="0.6"/>
<polygon points="754.7,694.3 749.4,695.4 751.8,739.3 757.0,738.2" fill="#b080e2" stroke="#b080e2" stroke-width="0.6"/>
<polygon points="485.5,697.0 483.6,693.5 492.5,737.4 494.4,740.9" fill="#765898" stroke="#765898" stroke-width="0.6"/>
<polygon points="749.4,695.4 744.7,696.2 747.3,740.2 751.8,739.3" fill="#b180e2" stroke="#b180e2" stroke-width="0.6"/>
<polygon points="744.7,696.2 740.7,696.9 743.4,740.8 747.3,740.2" fill="#b181e3" stroke="#b181e3" stroke-width="0.6"/>
<polygon points="740.7,696.9 737.4,697.3 740.2,741.3 743.4,740.8" fill="#b281e4" stroke="#b281e4" stroke-width="0.6"/>
<polygon points="737.4,697.3 734.8,697.6 737.6,741.5 740.2,741.3" fill="#b281e4" stroke="#b281e4" stroke-width="0.6"/>
<polygon points="734.8,697.6 731.4,698.0 734.3,741.9 737.6,741.5" fill="#b281e4" stroke="#b281e4" stroke-width="0.6"/>
<polygon points="731.4,698.0 727.4,698.5 730.4,742.5 734.3,741.9" fill="#b281e4" stroke="#b281e4" stroke-width="0.6"/>
<polygon points="488.0,700.1 485.5,697.0 494.4,740.9 496.8,743.9" fill="#765898" stroke="#765898" stroke-width="0.6"/>
<polygon points="727.4,698.5 722.8,699.3 725.9,743.2 730.4,742.5" fill="#b281e4" stroke="#b281e4" stroke-width="0.6"/>
<polygon points="722.8,699.3 717.4,700.2 720.7,744.1 725.9,743.2" fill="#b281e3" stroke="#b281e3" stroke-width="0.6"/>
<polygon points="717.4,700.2 712.1,700.9 715.4,744.8 720.7,744.1" fill="#b281e4" stroke="#b281e4" stroke-width="0.6"/>
<polygon points="676.6,701.0 674.5,700.9 678.8,744.9 680.8,744.9" fill="#b080e2" stroke="#b080e2" stroke-width="0.6"/>
<polygon points="679.4,701.2 676.6,701.0 680.8,744.9 683.6,745.1" fill="#ad7ddd" stroke="#ad7ddd" stroke-width="0.6"/>
<polygon points="674.5,700.9 673.0,701.2 677.3,745.1 678.8,744.9" fill="#b281e4" stroke="#b281e4" stroke-width="0.6"/>
<polygon points="712.1,700.9 706.7,701.5 710.2,745.4 715.4,744.8" fill="#b281e4" stroke="#b281e4" stroke-width="0.6"/>
<polygon points="491.0,702.7 488.0,700.1 496.8,743.9 499.8,746.6" fill="#795a9c" stroke="#795a9c" stroke-width="0.6"/>
<polygon points="682.9,701.8 679.4,701.2 683.6,745.1 687.0,745.7" fill="#aa7bd9" stroke="#aa7bd9" stroke-width="0.6"/>
<polygon points="673.0,701.2 672.2,701.8 676.5,745.7 677.3,745.1" fill="#9c72c8" stroke="#9c72c8" stroke-width="0.6"/>
<polygon points="706.7,701.5 701.4,701.9 705.0,745.8 710.2,745.4" fill="#b281e4" stroke="#b281e4" stroke-width="0.6"/>
<polygon points="686.8,702.1 682.9,701.8 687.0,745.7 690.8,746.0" fill="#ad7ede" stroke="#ad7ede" stroke-width="0.6"/>
<polygon points="701.4,701.9 696.1,702.2 699.8,746.1 705.0,745.8" fill="#b281e3" stroke="#b281e3" stroke-width="0.6"/>
<polygon points="691.2,702.3 686.8,702.1 690.8,746.0 695.1,746.2" fill="#af7fe1" stroke="#af7fe1" stroke-width="0.6"/>
<polygon points="696.1,702.2 691.2,702.3 695.1,746.2 699.8,746.1" fill="#b180e2" stroke="#b180e2" stroke-width="0.6"/>
<polygon points="672.2,701.8 670.7,703.0 675.1,746.9 676.5,745.7" fill="#976ec1" stroke="#976ec1" stroke-width="0.6"/>
<polygon points="494.7,705.0 491.0,702.7 499.8,746.6 503.4,748.8" fill="#8361a9" stroke="#8361a9" stroke-width="0.6"/>
<polygon points="670.7,703.0 668.4,704.9 672.8,748.8 675.1,746.9" fill="#956dbf" stroke="#956dbf" stroke-width="0.6"/>
<polygon points="499.0,706.8 494.7,705.0 503.4,748.8 507.6,750.7" fill="#8e69b7" stroke="#8e69b7" stroke-width="0.6"/>
<polygon points="668.4,704.9 665.4,707.4 669.9,751.3 672.8,748.8" fill="#946dbe" stroke="#946dbe" stroke-width="0.6"/>
<polygon points="564.7,706.0 555.4,706.8 562.6,750.7 571.7,749.9" fill="#b180e2" stroke="#b180e2" stroke-width="0.6"/>
<polygon points="555.4,706.8 549.9,707.4 557.2,751.3 562.6,750.7" fill="#b180e2" stroke="#b180e2" stroke-width="0.6"/>
<polygon points="503.5,708.3 499.0,706.8 507.6,750.7 512.0,752.1" fill="#966ec1" stroke="#966ec1" stroke-width="0.6"/>
<polygon points="549.9,707.4 545.1,708.0 552.6,751.9 557.2,751.3" fill="#b180e3" stroke="#b180e3" stroke-width="0.6"/>
<polygon points="545.1,708.0 540.1,708.7 547.7,752.6 552.6,751.9" fill="#b181e3" stroke="#b181e3" stroke-width="0.6"/>
<polygon points="508.3,709.3 503.5,708.3 512.0,752.1 516.7,753.2" fill="#9e73ca" stroke="#9e73ca" stroke-width="0.6"/>
<polygon points="665.4,707.4 661.7,710.6 666.3,754.5 669.9,751.3" fill="#946cbe" stroke="#946cbe" stroke-width="0.6"/>
<polygon points="540.1,708.7 534.7,709.5 542.4,753.4 547.7,752.6" fill="#b181e3" stroke="#b181e3" stroke-width="0.6"/>
<polygon points="513.4,710.0 508.3,709.3 516.7,753.2 521.6,753.9" fill="#a478d2" stroke="#a478d2" stroke-width="0.6"/>
<polygon points="534.7,709.5 529.4,710.0 537.2,753.9 542.4,753.4" fill="#b080e2" stroke="#b080e2" stroke-width="0.6"/>
<polygon points="569.3,713.7 564.7,706.0 571.7,749.9 576.1,757.5" fill="#765898" stroke="#765898" stroke-width="0.6"/>
<polygon points="518.7,710.3 513.4,710.0 521.6,753.9 526.8,754.1" fill="#a97bd9" stroke="#a97bd9" stroke-width="0.6"/>
<polygon points="529.4,710.0 524.0,710.3 532.0,754.2 537.2,753.9" fill="#af7fe0" stroke="#af7fe0" stroke-width="0.6"/>
<polygon points="524.0,710.3 518.7,710.3 526.8,754.1 532.0,754.2" fill="#ac7ddd" stroke="#ac7ddd" stroke-width="0.6"/>
<polygon points="661.7,710.6 657.6,713.7 662.3,757.5 666.3,754.5" fill="#9a71c6" stroke="#9a71c6" stroke-width="0.6"/>
<polygon points="657.6,713.7 653.0,716.6 657.9,760.5 662.3,757.5" fill="#a074cd" stroke="#a074cd" stroke-width="0.6"/>
<polygon points="572.5,717.5 569.3,713.7 576.1,757.5 579.3,761.3" fill="#765898" stroke="#765898" stroke-width="0.6"/>
<polygon points="653.0,716.6 648.1,719.4 653.0,763.2 657.9,760.5" fill="#a478d2" stroke="#a478d2" stroke-width="0.6"/>
<polygon points="575.9,720.0 572.5,717.5 579.3,761.3 582.6,763.8" fill="#8260a7" stroke="#8260a7" stroke-width="0.6"/>
<polygon points="648.1,719.4 642.7,722.0 647.8,765.9 653.0,763.2" fill="#a87ad7" stroke="#a87ad7" stroke-width="0.6"/>
<polygon points="580.0,722.0 575.9,720.0 582.6,763.8 586.7,765.8" fill="#8f69b7" stroke="#8f69b7" stroke-width="0.6"/>
<polygon points="584.8,723.6 580.0,722.0 586.7,765.8 591.3,767.4" fill="#9a70c5" stroke="#9a70c5" stroke-width="0.6"/>
<polygon points="642.7,722.0 637.4,724.2 642.6,768.1 647.8,765.9" fill="#ac7ddc" stroke="#ac7ddc" stroke-width="0.6"/>
<polygon points="589.7,725.0 584.8,723.6 591.3,767.4 596.2,768.8" fill="#9d73ca" stroke="#9d73ca" stroke-width="0.6"/>
<polygon points="637.4,724.2 632.0,726.0 637.4,769.8 642.6,768.1" fill="#af7fe1" stroke="#af7fe1" stroke-width="0.6"/>
<polygon points="594.8,726.2 589.7,725.0 596.2,768.8 601.1,770.0" fill="#a175ce" stroke="#a175ce" stroke-width="0.6"/>
<polygon points="632.0,726.0 626.7,727.2 632.2,771.1 637.4,769.8" fill="#b181e3" stroke="#b181e3" stroke-width="0.6"/>
<polygon points="600.0,727.2 594.8,726.2 601.1,770.0 606.2,771.1" fill="#a477d2" stroke="#a477d2" stroke-width="0.6"/>
<polygon points="605.4,728.1 600.0,727.2 606.2,771.1 611.4,771.9" fill="#a779d6" stroke="#a779d6" stroke-width="0.6"/>
<polygon points="626.7,727.2 621.4,728.1 627.0,771.9 632.2,771.1" fill="#b281e4" stroke="#b281e4" stroke-width="0.6"/>
<polygon points="621.4,728.1 616.1,728.5 621.8,772.3 627.0,771.9" fill="#b180e3" stroke="#b180e3" stroke-width="0.6"/>
<polygon points="610.7,728.5 605.4,728.1 611.4,771.9 616.6,772.3" fill="#ab7cdb" stroke="#ab7cdb" stroke-width="0.6"/>
<polygon points="616.1,728.5 610.7,728.5 616.6,772.3 621.8,772.3" fill="#af7fe0" stroke="#af7fe0" stroke-width="0.6"/>
<polygon points="566.9,367.7 568.4,365.7 569.8,364.2 571.1,363.1 572.3,362.4 573.5,361.9 574.8,361.5 576.2,361.1 577.8,360.9 580.2,360.9 583.6,361.1 587.9,361.6 593.1,362.4 598.3,363.1 603.2,363.9 608.1,364.6 612.9,365.4 617.8,366.2 622.9,367.0 628.2,367.9 633.8,368.9 638.2,369.7 641.6,370.4 643.9,370.9 645.1,371.4 646.3,371.9 647.2,372.6 648.1,373.3 648.9,374.2 649.5,375.3 650.1,376.5 650.6,377.9 650.9,379.6 650.6,382.1 649.6,385.6 647.3,391.4 641.9,403.4 648.5,407.6 652.1,409.8 655.1,411.4 658.0,412.8 661.0,414.2 663.9,415.7 666.7,417.2 669.4,419.0 672.0,420.8 674.3,422.6 676.1,424.2 677.6,425.6 678.7,427.0 680.0,428.6 681.6,430.5 684.1,433.2 688.9,438.6 694.9,435.0 698.6,433.1 702.0,431.6 705.9,430.2 710.2,428.8 715.0,427.6 720.3,426.4 726.2,425.2 732.6,424.2 738.0,423.2 742.4,422.3 745.9,421.5 748.3,420.7 751.2,420.0 754.6,419.3 758.4,418.7 762.7,418.0 767.2,417.8 772.0,417.9 777.1,418.3 782.4,419.1 787.6,420.2 792.7,421.5 797.6,423.1 802.5,424.9 807.4,426.4 812.5,427.7 817.7,428.5 823.0,429.1 828.1,430.0 832.9,431.4 837.4,433.1 841.7,435.2 845.6,437.5 849.0,439.9 852.1,442.4 854.7,445.1 856.9,447.6 858.6,449.8 859.9,451.9 860.7,453.8 862.0,455.7 863.9,457.5 866.3,459.4 869.3,461.2 872.1,463.3 874.8,465.5 877.3,468.0 879.7,470.7 881.7,473.2 883.2,475.6 884.3,477.8 885.0,479.9 885.5,482.5 885.9,485.7 886.2,489.4 886.3,493.6 886.4,498.2 886.5,503.1 886.5,508.3 886.5,513.8 886.5,518.9 886.3,523.6 886.2,529.0 885.7,538.0 881.4,540.3 879.0,541.5 877.0,542.5 875.1,543.4 873.2,544.4 871.1,545.5 869.0,546.7 866.7,548.0 864.2,549.4 861.9,550.9 859.6,552.4 857.4,554.0 855.2,555.6 853.1,557.2 851.1,558.9 849.1,560.6 847.2,562.4 845.3,564.4 843.5,566.8 841.8,569.5 840.1,572.5 838.7,575.6 837.6,578.7 836.8,581.9 836.3,585.1 836.0,588.4 835.7,591.7 835.6,595.1 835.6,598.5 835.8,602.1 836.1,606.0 836.7,610.1 837.4,614.5 838.1,618.9 838.7,623.5 839.2,628.2 839.7,633.1 840.0,637.9 840.2,642.7 840.2,647.5 840.2,652.3 839.8,656.6 839.3,660.3 838.6,663.5 837.7,666.2 836.1,668.7 833.9,670.9 831.1,673.0 827.7,674.9 824.0,676.7 820.2,678.4 816.1,680.1 811.8,681.7 807.3,683.2 802.5,684.7 797.4,686.1 792.0,687.4 786.7,688.6 781.3,689.7 776.0,690.6 770.7,691.4 765.4,692.3 760.0,693.2 754.7,694.3 749.4,695.4 744.7,696.2 740.7,696.9 737.4,697.3 734.8,697.6 731.4,698.0 727.4,698.5 722.8,699.3 717.4,700.2 712.1,700.9 706.7,701.5 701.4,701.9 696.1,702.2 691.2,702.3 686.8,702.1 682.9,701.8 679.4,701.2 676.6,701.0 674.5,700.9 673.0,701.2 672.2,701.8 670.7,703.0 668.4,704.9 665.4,707.4 661.7,710.6 657.6,713.7 653.0,716.6 648.1,719.4 642.7,722.0 637.4,724.2 632.0,726.0 626.7,727.2 621.4,728.1 616.1,728.5 610.7,728.5 605.4,728.1 600.0,727.2 594.8,726.2 589.7,725.0 584.8,723.6 580.0,722.0 575.9,720.0 572.5,717.5 569.3,713.7 564.7,706.0 555.4,706.8 549.9,707.4 545.1,708.0 540.1,708.7 534.7,709.5 529.4,710.0 524.0,710.3 518.7,710.3 513.4,710.0 508.3,709.3 503.5,708.3 499.0,706.8 494.7,705.0 491.0,702.7 488.0,700.1 485.5,697.0 483.6,693.5 482.0,690.0 480.7,686.4 479.6,682.7 478.8,679.0 478.3,675.3 478.0,671.5 478.1,666.8 478.7,658.4 475.7,656.6 473.1,655.1 469.7,653.2 465.4,650.8 460.0,647.9 455.1,645.0 450.7,642.3 446.8,639.6 443.3,636.9 440.5,634.0 438.4,630.9 436.9,627.4 436.1,623.7 435.5,620.5 435.0,617.7 434.7,615.4 434.7,613.7 434.7,611.8 434.9,609.9 435.2,608.0 435.8,606.0 436.4,604.0 437.3,602.1 438.3,600.3 439.5,598.4 440.9,596.6 442.6,594.8 444.5,592.9 446.7,591.0 448.7,589.3 450.7,587.8 453.0,586.1 457.0,583.5 456.2,577.6 455.7,574.2 455.3,571.2 454.9,568.1 454.6,564.9 454.2,561.7 453.9,558.6 453.6,555.5 453.4,552.5 453.2,549.7 453.0,547.1 452.8,544.7 452.7,542.6 452.9,540.5 453.5,538.5 454.3,536.6 455.6,534.7 456.8,532.9 458.1,531.1 459.7,528.9 462.6,524.9 458.4,522.1 456.1,520.4 454.2,519.0 452.2,517.5 450.3,515.9 448.5,514.0 447.0,511.9 445.7,509.5 444.7,506.8 443.8,504.4 443.0,502.1 442.3,500.1 441.7,498.3 441.6,496.2 441.8,493.7 442.5,490.8 443.6,487.6 444.8,484.7 446.1,482.0 448.0,479.0 451.6,474.2 449.8,471.1 449.1,469.1 448.8,467.3 448.8,465.2 449.1,462.8 449.8,460.3 451.0,457.5 452.7,454.5 454.8,451.3 457.1,448.2 459.6,445.3 462.3,442.5 465.2,439.8 468.1,437.4 471.2,435.1 474.3,433.1 477.5,431.2 480.4,429.5 483.1,427.8 485.5,426.1 487.7,424.5 489.9,422.6 492.3,420.5 494.9,418.1 497.5,415.5 500.3,413.0 503.2,410.7 506.2,408.6 509.2,406.7 512.6,404.9 516.3,403.3 520.3,401.9 524.6,400.6 528.9,399.6 533.2,398.7 537.6,398.1 541.9,397.6 545.6,396.8 548.6,395.6 550.9,393.9 552.5,391.9 554.2,389.4 555.9,386.5 557.8,383.2 559.7,379.5 561.6,376.1 563.4,373.0 565.1,370.2" fill="#cd90fc"/>
<clipPath id="cav"><polygon points="505.4,689.4 503.0,686.4 501.6,684.4 500.4,682.4 499.1,680.0 497.8,677.4 496.7,674.4 495.9,671.2 495.4,667.8 495.1,664.0 494.9,660.5 494.8,657.3 494.7,654.4 494.7,651.7 494.0,649.3 492.7,647.2 490.7,645.3 488.0,643.7 485.3,642.3 482.7,641.1 480.0,640.1 477.4,639.2 474.9,638.4 472.4,637.7 470.2,636.9 468.0,636.2 465.8,635.1 463.5,633.7 461.2,631.9 458.8,629.8 456.7,627.5 455.0,625.1 453.6,622.6 452.6,619.9 452.0,617.2 451.9,614.6 452.2,611.9 453.0,609.3 454.1,606.6 455.6,604.0 457.4,601.3 459.5,598.6 462.0,595.9 465.0,593.3 469.2,589.9 477.6,583.9 474.9,578.4 473.5,575.4 472.4,573.1 471.4,570.8 470.5,568.7 469.7,566.4 468.9,564.1 468.3,561.6 467.8,559.1 467.4,556.7 467.3,554.3 467.3,552.0 467.4,549.9 467.8,547.7 468.3,545.5 469.1,543.3 469.9,541.2 471.2,538.8 472.8,536.3 475.4,532.8 480.7,526.3 478.5,514.3 475.3,514.5 473.4,514.4 471.8,514.0 470.1,513.4 468.2,512.5 466.6,511.4 465.0,510.1 463.6,508.7 462.4,507.0 461.3,505.4 460.4,503.7 459.7,501.9 459.1,500.1 458.8,498.3 458.6,496.5 458.6,494.7 458.7,492.8 459.2,491.1 459.9,489.5 460.9,487.9 462.2,486.5 463.5,484.9 464.9,483.2 466.8,480.9 470.2,476.5 468.4,472.7 467.5,470.6 466.8,468.9 466.3,467.2 465.8,465.4 465.6,463.7 465.6,462.0 465.8,460.4 466.3,458.8 467.0,457.1 467.8,455.4 468.9,453.5 470.2,451.6 471.5,449.7 473.0,448.0 474.5,446.3 476.1,444.7 477.8,443.2 479.5,441.9 481.4,440.6 483.3,439.5 485.2,438.5 486.9,437.6 488.6,436.8 490.2,436.2 491.8,435.5 493.3,434.8 495.1,433.8 498.4,432.0 499.6,428.4 500.6,426.5 501.6,425.0 502.9,423.7 504.4,422.4 506.0,421.1 507.8,419.9 509.6,418.6 511.5,417.3 513.6,416.2 515.9,415.1 518.3,414.2 520.8,413.4 523.6,412.6 526.5,411.9 529.5,411.2 532.7,410.6 535.8,410.0 538.7,409.4 541.5,408.9 544.1,408.4 547.2,408.2 550.6,408.3 554.5,408.8 558.7,409.6 563.2,410.2 568.1,410.6 573.1,410.8 578.5,410.8 583.4,411.1 588.0,411.8 592.1,412.8 595.8,414.2 598.9,415.7 601.5,417.5 603.4,419.4 604.8,421.5 605.8,423.6 606.5,425.8 606.8,428.4 606.8,433.2 609.2,428.0 610.9,425.4 612.8,423.5 615.1,421.9 617.9,420.6 620.6,419.5 623.4,418.8 626.1,418.3 628.9,418.2 631.6,418.3 634.2,418.7 636.8,419.3 639.3,420.2 641.9,421.3 644.6,422.7 647.4,424.3 650.3,426.2 653.4,428.4 656.8,430.9 660.3,433.8 664.0,437.0 667.5,440.1 670.7,443.0 674.3,446.5 680.3,452.5 691.1,448.9 697.0,446.9 701.5,445.3 705.9,443.7 710.2,442.0 714.5,440.6 718.7,439.2 723.0,438.0 727.3,437.0 731.4,436.2 735.4,435.6 740.2,435.1 748.6,434.8 749.4,434.2 750.2,433.1 751.4,432.3 753.0,431.7 755.0,431.1 757.5,430.7 760.4,430.4 763.8,430.2 767.6,430.1 771.6,430.1 775.6,430.3 779.8,430.7 784.0,431.2 787.8,431.8 790.9,432.4 793.6,433.1 795.8,433.9 797.6,434.7 799.1,435.7 800.4,437.0 802.2,439.5 810.0,440.1 814.6,440.7 818.8,441.5 823.2,442.6 828.1,443.9 832.2,445.3 835.6,446.6 838.4,448.0 840.4,449.4 842.2,450.8 843.7,452.2 844.9,453.6 845.8,454.9 846.5,456.4 847.0,458.0 847.4,460.1 847.6,464.0 853.8,466.4 857.2,468.0 859.6,469.6 861.9,471.5 864.1,473.6 865.9,475.7 867.4,477.9 868.5,480.0 869.3,482.2 869.8,484.3 870.1,486.5 870.1,488.6 869.8,490.7 869.5,492.8 869.1,495.0 868.6,497.1 868.1,499.3 867.6,501.2 867.0,503.0 866.3,504.9 865.1,508.0 866.7,510.3 867.5,511.7 868.1,513.2 868.5,514.8 868.9,516.7 869.0,518.8 868.9,521.0 868.5,524.2 867.3,530.2 863.6,530.7 861.5,531.8 859.0,533.1 856.4,534.4 853.8,535.9 851.0,537.6 848.2,539.3 845.5,541.1 842.8,543.0 840.3,544.8 837.8,546.7 835.4,548.7 833.1,550.7 830.3,553.1 827.4,556.3 824.8,559.7 822.5,563.2 820.2,567.1 818.3,571.3 816.7,575.5 815.6,579.9 815.0,584.0 814.5,587.7 814.2,591.5 814.0,595.3 814.0,599.2 814.2,603.4 814.5,607.8 815.1,612.4 815.8,616.8 816.3,621.1 816.9,625.5 817.3,630.0 817.7,634.5 818.0,639.0 818.1,643.4 818.1,647.8 817.9,652.0 817.7,655.5 817.3,658.2 816.9,659.6 815.8,660.2 813.0,661.6 809.9,662.9 806.7,664.3 803.2,665.5 799.5,666.8 795.5,668.0 791.1,669.2 786.5,670.3 781.8,671.4 777.1,672.3 772.5,673.1 767.4,673.8 761.7,674.8 756.1,675.8 750.4,676.8 745.2,677.9 741.1,678.7 737.9,679.2 735.7,679.5 733.3,679.7 729.3,680.2 724.8,680.8 719.7,681.6 714.7,682.4 710.2,683.0 705.7,683.5 701.3,683.9 696.9,684.1 693.3,684.2 690.3,684.1 688.1,683.9 684.8,683.4 679.9,682.9 673.8,682.9 663.8,684.7 657.6,689.0 655.2,690.8 652.7,692.9 649.5,695.6 646.4,698.2 643.6,700.2 640.5,702.3 636.9,704.3 633.1,706.1 629.7,707.5 626.5,708.5 623.6,709.2 620.6,709.7 617.5,709.9 614.4,709.9 611.1,709.7 607.3,709.1 603.2,708.3 599.1,707.3 595.2,706.2 592.4,705.3 591.2,704.7 590.7,704.3 589.6,703.0 579.6,686.7 555.7,688.8 549.7,689.4 544.6,690.1 539.2,690.8 534.4,691.5 530.6,691.9 526.7,692.1 522.9,692.1 519.3,691.9 516.4,691.5 513.8,690.9 511.3,690.1 509.2,689.3 507.9,688.5"/></clipPath>
<g clip-path="url(#cav)">
<polygon points="505.4,689.4 503.0,686.4 501.6,684.4 500.4,682.4 499.1,680.0 497.8,677.4 496.7,674.4 495.9,671.2 495.4,667.8 495.1,664.0 494.9,660.5 494.8,657.3 494.7,654.4 494.7,651.7 494.0,649.3 492.7,647.2 490.7,645.3 488.0,643.7 485.3,642.3 482.7,641.1 480.0,640.1 477.4,639.2 474.9,638.4 472.4,637.7 470.2,636.9 468.0,636.2 465.8,635.1 463.5,633.7 461.2,631.9 458.8,629.8 456.7,627.5 455.0,625.1 453.6,622.6 452.6,619.9 452.0,617.2 451.9,614.6 452.2,611.9 453.0,609.3 454.1,606.6 455.6,604.0 457.4,601.3 459.5,598.6 462.0,595.9 465.0,593.3 469.2,589.9 477.6,583.9 474.9,578.4 473.5,575.4 472.4,573.1 471.4,570.8 470.5,568.7 469.7,566.4 468.9,564.1 468.3,561.6 467.8,559.1 467.4,556.7 467.3,554.3 467.3,552.0 467.4,549.9 467.8,547.7 468.3,545.5 469.1,543.3 469.9,541.2 471.2,538.8 472.8,536.3 475.4,532.8 480.7,526.3 478.5,514.3 475.3,514.5 473.4,514.4 471.8,514.0 470.1,513.4 468.2,512.5 466.6,511.4 465.0,510.1 463.6,508.7 462.4,507.0 461.3,505.4 460.4,503.7 459.7,501.9 459.1,500.1 458.8,498.3 458.6,496.5 458.6,494.7 458.7,492.8 459.2,491.1 459.9,489.5 460.9,487.9 462.2,486.5 463.5,484.9 464.9,483.2 466.8,480.9 470.2,476.5 468.4,472.7 467.5,470.6 466.8,468.9 466.3,467.2 465.8,465.4 465.6,463.7 465.6,462.0 465.8,460.4 466.3,458.8 467.0,457.1 467.8,455.4 468.9,453.5 470.2,451.6 471.5,449.7 473.0,448.0 474.5,446.3 476.1,444.7 477.8,443.2 479.5,441.9 481.4,440.6 483.3,439.5 485.2,438.5 486.9,437.6 488.6,436.8 490.2,436.2 491.8,435.5 493.3,434.8 495.1,433.8 498.4,432.0 499.6,428.4 500.6,426.5 501.6,425.0 502.9,423.7 504.4,422.4 506.0,421.1 507.8,419.9 509.6,418.6 511.5,417.3 513.6,416.2 515.9,415.1 518.3,414.2 520.8,413.4 523.6,412.6 526.5,411.9 529.5,411.2 532.7,410.6 535.8,410.0 538.7,409.4 541.5,408.9 544.1,408.4 547.2,408.2 550.6,408.3 554.5,408.8 558.7,409.6 563.2,410.2 568.1,410.6 573.1,410.8 578.5,410.8 583.4,411.1 588.0,411.8 592.1,412.8 595.8,414.2 598.9,415.7 601.5,417.5 603.4,419.4 604.8,421.5 605.8,423.6 606.5,425.8 606.8,428.4 606.8,433.2 609.2,428.0 610.9,425.4 612.8,423.5 615.1,421.9 617.9,420.6 620.6,419.5 623.4,418.8 626.1,418.3 628.9,418.2 631.6,418.3 634.2,418.7 636.8,419.3 639.3,420.2 641.9,421.3 644.6,422.7 647.4,424.3 650.3,426.2 653.4,428.4 656.8,430.9 660.3,433.8 664.0,437.0 667.5,440.1 670.7,443.0 674.3,446.5 680.3,452.5 691.1,448.9 697.0,446.9 701.5,445.3 705.9,443.7 710.2,442.0 714.5,440.6 718.7,439.2 723.0,438.0 727.3,437.0 731.4,436.2 735.4,435.6 740.2,435.1 748.6,434.8 749.4,434.2 750.2,433.1 751.4,432.3 753.0,431.7 755.0,431.1 757.5,430.7 760.4,430.4 763.8,430.2 767.6,430.1 771.6,430.1 775.6,430.3 779.8,430.7 784.0,431.2 787.8,431.8 790.9,432.4 793.6,433.1 795.8,433.9 797.6,434.7 799.1,435.7 800.4,437.0 802.2,439.5 810.0,440.1 814.6,440.7 818.8,441.5 823.2,442.6 828.1,443.9 832.2,445.3 835.6,446.6 838.4,448.0 840.4,449.4 842.2,450.8 843.7,452.2 844.9,453.6 845.8,454.9 846.5,456.4 847.0,458.0 847.4,460.1 847.6,464.0 853.8,466.4 857.2,468.0 859.6,469.6 861.9,471.5 864.1,473.6 865.9,475.7 867.4,477.9 868.5,480.0 869.3,482.2 869.8,484.3 870.1,486.5 870.1,488.6 869.8,490.7 869.5,492.8 869.1,495.0 868.6,497.1 868.1,499.3 867.6,501.2 867.0,503.0 866.3,504.9 865.1,508.0 866.7,510.3 867.5,511.7 868.1,513.2 868.5,514.8 868.9,516.7 869.0,518.8 868.9,521.0 868.5,524.2 867.3,530.2 863.6,530.7 861.5,531.8 859.0,533.1 856.4,534.4 853.8,535.9 851.0,537.6 848.2,539.3 845.5,541.1 842.8,543.0 840.3,544.8 837.8,546.7 835.4,548.7 833.1,550.7 830.3,553.1 827.4,556.3 824.8,559.7 822.5,563.2 820.2,567.1 818.3,571.3 816.7,575.5 815.6,579.9 815.0,584.0 814.5,587.7 814.2,591.5 814.0,595.3 814.0,599.2 814.2,603.4 814.5,607.8 815.1,612.4 815.8,616.8 816.3,621.1 816.9,625.5 817.3,630.0 817.7,634.5 818.0,639.0 818.1,643.4 818.1,647.8 817.9,652.0 817.7,655.5 817.3,658.2 816.9,659.6 815.8,660.2 813.0,661.6 809.9,662.9 806.7,664.3 803.2,665.5 799.5,666.8 795.5,668.0 791.1,669.2 786.5,670.3 781.8,671.4 777.1,672.3 772.5,673.1 767.4,673.8 761.7,674.8 756.1,675.8 750.4,676.8 745.2,677.9 741.1,678.7 737.9,679.2 735.7,679.5 733.3,679.7 729.3,680.2 724.8,680.8 719.7,681.6 714.7,682.4 710.2,683.0 705.7,683.5 701.3,683.9 696.9,684.1 693.3,684.2 690.3,684.1 688.1,683.9 684.8,683.4 679.9,682.9 673.8,682.9 663.8,684.7 657.6,689.0 655.2,690.8 652.7,692.9 649.5,695.6 646.4,698.2 643.6,700.2 640.5,702.3 636.9,704.3 633.1,706.1 629.7,707.5 626.5,708.5 623.6,709.2 620.6,709.7 617.5,709.9 614.4,709.9 611.1,709.7 607.3,709.1 603.2,708.3 599.1,707.3 595.2,706.2 592.4,705.3 591.2,704.7 590.7,704.3 589.6,703.0 579.6,686.7 555.7,688.8 549.7,689.4 544.6,690.1 539.2,690.8 534.4,691.5 530.6,691.9 526.7,692.1 522.9,692.1 519.3,691.9 516.4,691.5 513.8,690.9 511.3,690.1 509.2,689.3 507.9,688.5" fill="#765898"/>
<polygon points="547.2,408.2 550.6,408.3 554.4,434.7 551.0,434.6" fill="#ac7ddc" stroke="#ac7ddc" stroke-width="0.6"/>
<polygon points="544.1,408.4 547.2,408.2 551.0,434.6 548.0,434.7" fill="#b080e2" stroke="#b080e2" stroke-width="0.6"/>
<polygon points="550.6,408.3 554.5,408.8 558.2,435.2 554.4,434.7" fill="#a779d6" stroke="#a779d6" stroke-width="0.6"/>
<polygon points="541.5,408.9 544.1,408.4 548.0,434.7 545.4,435.2" fill="#b281e4" stroke="#b281e4" stroke-width="0.6"/>
<polygon points="538.7,409.4 541.5,408.9 545.4,435.2 542.6,435.8" fill="#b281e4" stroke="#b281e4" stroke-width="0.6"/>
<polygon points="554.5,408.8 558.7,409.6 562.4,436.0 558.2,435.2" fill="#a276d0" stroke="#a276d0" stroke-width="0.6"/>
<polygon points="535.8,410.0 538.7,409.4 542.6,435.8 539.7,436.3" fill="#b281e4" stroke="#b281e4" stroke-width="0.6"/>
<polygon points="558.7,409.6 563.2,410.2 566.9,436.6 562.4,436.0" fill="#a779d5" stroke="#a779d5" stroke-width="0.6"/>
<polygon points="532.7,410.6 535.8,410.0 539.7,436.3 536.7,437.0" fill="#b281e4" stroke="#b281e4" stroke-width="0.6"/>
<polygon points="563.2,410.2 568.1,410.6 571.6,437.0 566.9,436.6" fill="#aa7cda" stroke="#aa7cda" stroke-width="0.6"/>
<polygon points="568.1,410.6 573.1,410.8 576.6,437.2 571.6,437.0" fill="#ad7ddd" stroke="#ad7ddd" stroke-width="0.6"/>
<polygon points="573.1,410.8 578.5,410.8 581.9,437.2 576.6,437.2" fill="#af7fe0" stroke="#af7fe0" stroke-width="0.6"/>
<polygon points="529.5,411.2 532.7,410.6 536.7,437.0 533.5,437.6" fill="#b281e4" stroke="#b281e4" stroke-width="0.6"/>
<polygon points="578.5,410.8 583.4,411.1 586.8,437.5 581.9,437.2" fill="#ab7cdc" stroke="#ab7cdc" stroke-width="0.6"/>
<polygon points="583.4,411.1 588.0,411.8 591.3,438.2 586.8,437.5" fill="#a679d5" stroke="#a679d5" stroke-width="0.6"/>
<polygon points="526.5,411.9 529.5,411.2 533.5,437.6 530.5,438.3" fill="#b281e3" stroke="#b281e3" stroke-width="0.6"/>
<polygon points="523.6,412.6 526.5,411.9 530.5,438.3 527.7,439.0" fill="#b180e3" stroke="#b180e3" stroke-width="0.6"/>
<polygon points="588.0,411.8 592.1,412.8 595.4,439.2 591.3,438.2" fill="#9f74cc" stroke="#9f74cc" stroke-width="0.6"/>
<polygon points="520.8,413.4 523.6,412.6 527.7,439.0 525.0,439.8" fill="#b080e2" stroke="#b080e2" stroke-width="0.6"/>
<polygon points="592.1,412.8 595.8,414.2 599.0,440.6 595.4,439.2" fill="#966ec1" stroke="#966ec1" stroke-width="0.6"/>
<polygon points="518.3,414.2 520.8,413.4 525.0,439.8 522.5,440.6" fill="#af7fe1" stroke="#af7fe1" stroke-width="0.6"/>
<polygon points="515.9,415.1 518.3,414.2 522.5,440.6 520.1,441.5" fill="#ac7ddd" stroke="#ac7ddd" stroke-width="0.6"/>
<polygon points="595.8,414.2 598.9,415.7 602.1,442.1 599.0,440.6" fill="#8d68b5" stroke="#8d68b5" stroke-width="0.6"/>
<polygon points="513.6,416.2 515.9,415.1 520.1,441.5 517.9,442.6" fill="#a87ad7" stroke="#a87ad7" stroke-width="0.6"/>
<polygon points="598.9,415.7 601.5,417.5 604.6,443.9 602.1,442.1" fill="#8260a7" stroke="#8260a7" stroke-width="0.6"/>
<polygon points="511.5,417.3 513.6,416.2 517.9,442.6 515.8,443.7" fill="#a376d0" stroke="#a376d0" stroke-width="0.6"/>
<polygon points="509.6,418.6 511.5,417.3 515.8,443.7 513.9,445.0" fill="#9c72c8" stroke="#9c72c8" stroke-width="0.6"/>
<polygon points="626.1,418.3 628.9,418.2 631.7,444.6 629.0,444.7" fill="#b180e3" stroke="#b180e3" stroke-width="0.6"/>
<polygon points="628.9,418.2 631.6,418.3 634.3,444.7 631.7,444.6" fill="#ae7edf" stroke="#ae7edf" stroke-width="0.6"/>
<polygon points="601.5,417.5 603.4,419.4 606.6,445.8 604.6,443.9" fill="#775999" stroke="#775999" stroke-width="0.6"/>
<polygon points="631.6,418.3 634.2,418.7 636.9,445.1 634.3,444.7" fill="#a87ad8" stroke="#a87ad8" stroke-width="0.6"/>
<polygon points="623.4,418.8 626.1,418.3 629.0,444.7 626.3,445.2" fill="#b281e4" stroke="#b281e4" stroke-width="0.6"/>
<polygon points="634.2,418.7 636.8,419.3 639.5,445.7 636.9,445.1" fill="#a176cf" stroke="#a176cf" stroke-width="0.6"/>
<polygon points="620.6,419.5 623.4,418.8 626.3,445.2 623.5,445.9" fill="#af7fe0" stroke="#af7fe0" stroke-width="0.6"/>
<polygon points="507.8,419.9 509.6,418.6 513.9,445.0 512.1,446.3" fill="#9a70c5" stroke="#9a70c5" stroke-width="0.6"/>
<polygon points="636.8,419.3 639.3,420.2 641.9,446.6 639.5,445.7" fill="#9970c5" stroke="#9970c5" stroke-width="0.6"/>
<polygon points="617.9,420.6 620.6,419.5 623.5,445.9 620.8,447.0" fill="#aa7bd9" stroke="#aa7bd9" stroke-width="0.6"/>
<polygon points="603.4,419.4 604.8,421.5 607.9,447.9 606.6,445.8" fill="#765898" stroke="#765898" stroke-width="0.6"/>
<polygon points="506.0,421.1 507.8,419.9 512.1,446.3 510.4,447.5" fill="#986fc3" stroke="#986fc3" stroke-width="0.6"/>
<polygon points="639.3,420.2 641.9,421.3 644.5,447.7 641.9,446.6" fill="#936cbd" stroke="#936cbd" stroke-width="0.6"/>
<polygon points="615.1,421.9 617.9,420.6 620.8,447.0 618.1,448.4" fill="#a377d1" stroke="#a377d1" stroke-width="0.6"/>
<polygon points="504.4,422.4 506.0,421.1 510.4,447.5 508.8,448.8" fill="#956dbf" stroke="#956dbf" stroke-width="0.6"/>
<polygon points="641.9,421.3 644.6,422.7 647.2,449.1 644.5,447.7" fill="#8e68b7" stroke="#8e68b7" stroke-width="0.6"/>
<polygon points="604.8,421.5 605.8,423.6 608.9,450.1 607.9,447.9" fill="#765898" stroke="#765898" stroke-width="0.6"/>
<polygon points="612.8,423.5 615.1,421.9 618.1,448.4 615.8,450.0" fill="#976ec2" stroke="#976ec2" stroke-width="0.6"/>
<polygon points="502.9,423.7 504.4,422.4 508.8,448.8 507.3,450.1" fill="#926bbc" stroke="#926bbc" stroke-width="0.6"/>
<polygon points="644.6,422.7 647.4,424.3 650.0,450.8 647.2,449.1" fill="#8a66b1" stroke="#8a66b1" stroke-width="0.6"/>
<polygon points="501.6,425.0 502.9,423.7 507.3,450.1 506.0,451.5" fill="#8864af" stroke="#8864af" stroke-width="0.6"/>
<polygon points="610.9,425.4 612.8,423.5 615.8,450.0 613.9,451.8" fill="#8965b0" stroke="#8965b0" stroke-width="0.6"/>
<polygon points="605.8,423.6 606.5,425.8 609.6,452.2 608.9,450.1" fill="#765898" stroke="#765898" stroke-width="0.6"/>
<polygon points="647.4,424.3 650.3,426.2 652.9,452.6 650.0,450.8" fill="#8663ad" stroke="#8663ad" stroke-width="0.6"/>
<polygon points="500.6,426.5 501.6,425.0 506.0,451.5 505.0,452.9" fill="#7e5ea2" stroke="#7e5ea2" stroke-width="0.6"/>
<polygon points="609.2,428.0 610.9,425.4 613.9,451.8 612.2,454.5" fill="#795a9c" stroke="#795a9c" stroke-width="0.6"/>
<polygon points="606.5,425.8 606.8,428.4 609.9,454.9 609.6,452.2" fill="#765898" stroke="#765898" stroke-width="0.6"/>
<polygon points="650.3,426.2 653.4,428.4 655.9,454.9 652.9,452.6" fill="#8361a8" stroke="#8361a8" stroke-width="0.6"/>
<polygon points="499.6,428.4 500.6,426.5 505.0,452.9 504.1,454.8" fill="#765898" stroke="#765898" stroke-width="0.6"/>
<polygon points="653.4,428.4 656.8,430.9 659.2,457.4 655.9,454.9" fill="#805fa5" stroke="#805fa5" stroke-width="0.6"/>
<polygon points="767.6,430.1 771.6,430.1 772.6,456.6 768.7,456.5" fill="#b181e3" stroke="#b181e3" stroke-width="0.6"/>
<polygon points="763.8,430.2 767.6,430.1 768.7,456.5 764.9,456.6" fill="#b281e4" stroke="#b281e4" stroke-width="0.6"/>
<polygon points="498.4,432.0 499.6,428.4 504.1,454.8 502.9,458.4" fill="#765898" stroke="#765898" stroke-width="0.6"/>
<polygon points="771.6,430.1 775.6,430.3 776.6,456.8 772.6,456.6" fill="#b080e2" stroke="#b080e2" stroke-width="0.6"/>
<polygon points="760.4,430.4 763.8,430.2 764.9,456.6 761.5,456.8" fill="#b281e4" stroke="#b281e4" stroke-width="0.6"/>
<polygon points="775.6,430.3 779.8,430.7 780.7,457.2 776.6,456.8" fill="#af7fe1" stroke="#af7fe1" stroke-width="0.6"/>
<polygon points="757.5,430.7 760.4,430.4 761.5,456.8 758.6,457.2" fill="#b281e4" stroke="#b281e4" stroke-width="0.6"/>
<polygon points="606.8,433.2 609.2,428.0 612.2,454.5 609.9,459.7" fill="#765898" stroke="#765898" stroke-width="0.6"/>
<polygon points="755.0,431.1 757.5,430.7 758.6,457.2 756.2,457.6" fill="#b080e2" stroke="#b080e2" stroke-width="0.6"/>
<polygon points="779.8,430.7 784.0,431.2 784.9,457.7 780.7,457.2" fill="#ae7edf" stroke="#ae7edf" stroke-width="0.6"/>
<polygon points="753.0,431.7 755.0,431.1 756.2,457.6 754.2,458.2" fill="#ac7ddc" stroke="#ac7ddc" stroke-width="0.6"/>
<polygon points="784.0,431.2 787.8,431.8 788.5,458.3 784.9,457.7" fill="#ac7ddd" stroke="#ac7ddd" stroke-width="0.6"/>
<polygon points="751.4,432.3 753.0,431.7 754.2,458.2 752.7,458.8" fill="#a477d2" stroke="#a477d2" stroke-width="0.6"/>
<polygon points="787.8,431.8 790.9,432.4 791.7,458.9 788.5,458.3" fill="#aa7cda" stroke="#aa7cda" stroke-width="0.6"/>
<polygon points="656.8,430.9 660.3,433.8 662.7,460.3 659.2,457.4" fill="#7e5ea3" stroke="#7e5ea3" stroke-width="0.6"/>
<polygon points="750.2,433.1 751.4,432.3 752.7,458.8 751.5,459.6" fill="#956dbf" stroke="#956dbf" stroke-width="0.6"/>
<polygon points="790.9,432.4 793.6,433.1 794.3,459.6 791.7,458.9" fill="#a679d5" stroke="#a679d5" stroke-width="0.6"/>
<polygon points="495.1,433.8 498.4,432.0 502.9,458.4 499.7,460.2" fill="#a477d2" stroke="#a477d2" stroke-width="0.6"/>
<polygon points="793.6,433.1 795.8,433.9 796.5,460.4 794.3,459.6" fill="#a075ce" stroke="#a075ce" stroke-width="0.6"/>
<polygon points="749.4,434.2 750.2,433.1 751.5,459.6 750.7,460.7" fill="#7a5b9e" stroke="#7a5b9e" stroke-width="0.6"/>
<polygon points="493.3,434.8 495.1,433.8 499.7,460.2 497.9,461.2" fill="#a679d4" stroke="#a679d4" stroke-width="0.6"/>
<polygon points="795.8,433.9 797.6,434.7 798.3,461.2 796.5,460.4" fill="#986fc3" stroke="#986fc3" stroke-width="0.6"/>
<polygon points="748.6,434.8 749.4,434.2 750.7,460.7 749.9,461.3" fill="#8b67b3" stroke="#8b67b3" stroke-width="0.6"/>
<polygon points="740.2,435.1 748.6,434.8 749.9,461.3 741.6,461.6" fill="#b281e4" stroke="#b281e4" stroke-width="0.6"/>
<polygon points="491.8,435.5 493.3,434.8 497.9,461.2 496.4,461.9" fill="#a87ad8" stroke="#a87ad8" stroke-width="0.6"/>
<polygon points="797.6,434.7 799.1,435.7 799.7,462.2 798.3,461.2" fill="#8d68b5" stroke="#8d68b5" stroke-width="0.6"/>
<polygon points="735.4,435.6 740.2,435.1 741.6,461.6 736.9,462.0" fill="#b281e4" stroke="#b281e4" stroke-width="0.6"/>
<polygon points="660.3,433.8 664.0,437.0 666.4,463.5 662.7,460.3" fill="#7d5da1" stroke="#7d5da1" stroke-width="0.6"/>
<polygon points="490.2,436.2 491.8,435.5 496.4,461.9 494.8,462.6" fill="#aa7cda" stroke="#aa7cda" stroke-width="0.6"/>
<polygon points="731.4,436.2 735.4,435.6 736.9,462.0 732.9,462.6" fill="#b180e3" stroke="#b180e3" stroke-width="0.6"/>
<polygon points="799.1,435.7 800.4,437.0 801.0,463.5 799.7,462.2" fill="#7d5da1" stroke="#7d5da1" stroke-width="0.6"/>
<polygon points="488.6,436.8 490.2,436.2 494.8,462.6 493.2,463.3" fill="#ac7ddd" stroke="#ac7ddd" stroke-width="0.6"/>
<polygon points="727.3,437.0 731.4,436.2 732.9,462.6 728.9,463.5" fill="#b080e1" stroke="#b080e1" stroke-width="0.6"/>
<polygon points="486.9,437.6 488.6,436.8 493.2,463.3 491.6,464.0" fill="#a97bd9" stroke="#a97bd9" stroke-width="0.6"/>
<polygon points="723.0,438.0 727.3,437.0 728.9,463.5 724.6,464.5" fill="#ae7edf" stroke="#ae7edf" stroke-width="0.6"/>
<polygon points="485.2,438.5 486.9,437.6 491.6,464.0 489.8,464.9" fill="#a779d6" stroke="#a779d6" stroke-width="0.6"/>
<polygon points="800.4,437.0 802.2,439.5 802.8,466.0 801.0,463.5" fill="#765898" stroke="#765898" stroke-width="0.6"/>
<polygon points="664.0,437.0 667.5,440.1 669.8,466.6 666.4,463.5" fill="#7c5ca0" stroke="#7c5ca0" stroke-width="0.6"/>
<polygon points="718.7,439.2 723.0,438.0 724.6,464.5 720.4,465.7" fill="#ad7ddd" stroke="#ad7ddd" stroke-width="0.6"/>
<polygon points="483.3,439.5 485.2,438.5 489.8,464.9 488.0,465.9" fill="#a478d3" stroke="#a478d3" stroke-width="0.6"/>
<polygon points="802.2,439.5 810.0,440.1 810.5,466.6 802.8,466.0" fill="#b080e2" stroke="#b080e2" stroke-width="0.6"/>
<polygon points="714.5,440.6 718.7,439.2 720.4,465.7 716.2,467.1" fill="#ab7cdb" stroke="#ab7cdb" stroke-width="0.6"/>
<polygon points="481.4,440.6 483.3,439.5 488.0,465.9 486.1,467.1" fill="#a276d0" stroke="#a276d0" stroke-width="0.6"/>
<polygon points="810.0,440.1 814.6,440.7 815.1,467.2 810.5,466.6" fill="#ae7edf" stroke="#ae7edf" stroke-width="0.6"/>
<polygon points="814.6,440.7 818.8,441.5 819.2,468.0 815.1,467.2" fill="#ab7cdc" stroke="#ab7cdc" stroke-width="0.6"/>
<polygon points="479.5,441.9 481.4,440.6 486.1,467.1 484.3,468.3" fill="#9d73c9" stroke="#9d73c9" stroke-width="0.6"/>
<polygon points="710.2,442.0 714.5,440.6 716.2,467.1 712.0,468.5" fill="#a97bd9" stroke="#a97bd9" stroke-width="0.6"/>
<polygon points="667.5,440.1 670.7,443.0 673.0,469.5 669.8,466.6" fill="#7b5c9f" stroke="#7b5c9f" stroke-width="0.6"/>
<polygon points="818.8,441.5 823.2,442.6 823.6,469.1 819.2,468.0" fill="#a97bd9" stroke="#a97bd9" stroke-width="0.6"/>
<polygon points="477.8,443.2 479.5,441.9 484.3,468.3 482.6,469.7" fill="#976fc2" stroke="#976fc2" stroke-width="0.6"/>
<polygon points="705.9,443.7 710.2,442.0 712.0,468.5 707.8,470.2" fill="#a87ad7" stroke="#a87ad7" stroke-width="0.6"/>
<polygon points="823.2,442.6 828.1,443.9 828.3,470.4 823.6,469.1" fill="#a779d6" stroke="#a779d6" stroke-width="0.6"/>
<polygon points="476.1,444.7 477.8,443.2 482.6,469.7 480.9,471.2" fill="#926bbb" stroke="#926bbb" stroke-width="0.6"/>
<polygon points="701.5,445.3 705.9,443.7 707.8,470.2 703.4,471.8" fill="#a97bd8" stroke="#a97bd8" stroke-width="0.6"/>
<polygon points="828.1,443.9 832.2,445.3 832.4,471.8 828.3,470.4" fill="#a477d2" stroke="#a477d2" stroke-width="0.6"/>
<polygon points="670.7,443.0 674.3,446.5 676.5,473.0 673.0,469.5" fill="#7a5b9d" stroke="#7a5b9d" stroke-width="0.6"/>
<polygon points="474.5,446.3 476.1,444.7 480.9,471.2 479.3,472.8" fill="#8c67b4" stroke="#8c67b4" stroke-width="0.6"/>
<polygon points="832.2,445.3 835.6,446.6 835.8,473.2 832.4,471.8" fill="#9f74cc" stroke="#9f74cc" stroke-width="0.6"/>
<polygon points="697.0,446.9 701.5,445.3 703.4,471.8 698.9,473.4" fill="#a97bd9" stroke="#a97bd9" stroke-width="0.6"/>
<polygon points="473.0,448.0 474.5,446.3 479.3,472.8 477.8,474.5" fill="#8864af" stroke="#8864af" stroke-width="0.6"/>
<polygon points="835.6,446.6 838.4,448.0 838.5,474.5 835.8,473.2" fill="#986fc3" stroke="#986fc3" stroke-width="0.6"/>
<polygon points="691.1,448.9 697.0,446.9 698.9,473.4 693.2,475.4" fill="#aa7cda" stroke="#aa7cda" stroke-width="0.6"/>
<polygon points="838.4,448.0 840.4,449.4 840.5,475.9 838.5,474.5" fill="#8d67b5" stroke="#8d67b5" stroke-width="0.6"/>
<polygon points="471.5,449.7 473.0,448.0 477.8,474.5 476.4,476.2" fill="#8462aa" stroke="#8462aa" stroke-width="0.6"/>
<polygon points="674.3,446.5 680.3,452.5 682.5,479.0 676.5,473.0" fill="#795a9c" stroke="#795a9c" stroke-width="0.6"/>
<polygon points="840.4,449.4 842.2,450.8 842.3,477.3 840.5,475.9" fill="#8764ae" stroke="#8764ae" stroke-width="0.6"/>
<polygon points="470.2,451.6 471.5,449.7 476.4,476.2 475.1,478.1" fill="#805fa5" stroke="#805fa5" stroke-width="0.6"/>
<polygon points="680.3,452.5 691.1,448.9 693.2,475.4 682.5,479.0" fill="#ab7cdb" stroke="#ab7cdb" stroke-width="0.6"/>
<polygon points="842.2,450.8 843.7,452.2 843.8,478.7 842.3,477.3" fill="#8160a6" stroke="#8160a6" stroke-width="0.6"/>
<polygon points="468.9,453.5 470.2,451.6 475.1,478.1 473.8,480.0" fill="#7d5da1" stroke="#7d5da1" stroke-width="0.6"/>
<polygon points="843.7,452.2 844.9,453.6 845.0,480.1 843.8,478.7" fill="#7a5b9e" stroke="#7a5b9e" stroke-width="0.6"/>
<polygon points="844.9,453.6 845.8,454.9 845.9,481.5 845.0,480.1" fill="#765898" stroke="#765898" stroke-width="0.6"/>
<polygon points="467.8,455.4 468.9,453.5 473.8,480.0 472.8,481.8" fill="#7a5a9c" stroke="#7a5a9c" stroke-width="0.6"/>
<polygon points="845.8,454.9 846.5,456.4 846.6,483.0 845.9,481.5" fill="#765898" stroke="#765898" stroke-width="0.6"/>
<polygon points="467.0,457.1 467.8,455.4 472.8,481.8 471.9,483.6" fill="#765899" stroke="#765899" stroke-width="0.6"/>
<polygon points="846.5,456.4 847.0,458.0 847.1,484.5 846.6,483.0" fill="#765898" stroke="#765898" stroke-width="0.6"/>
<polygon points="466.3,458.8 467.0,457.1 471.9,483.6 471.3,485.3" fill="#765898" stroke="#765898" stroke-width="0.6"/>
<polygon points="847.0,458.0 847.4,460.1 847.4,486.6 847.1,484.5" fill="#765898" stroke="#765898" stroke-width="0.6"/>
<polygon points="465.8,460.4 466.3,458.8 471.3,485.3 470.8,486.9" fill="#765898" stroke="#765898" stroke-width="0.6"/>
<polygon points="465.6,462.0 465.8,460.4 470.8,486.9 470.6,488.5" fill="#765898" stroke="#765898" stroke-width="0.6"/>
<polygon points="847.4,460.1 847.6,464.0 847.6,490.6 847.4,486.6" fill="#765898" stroke="#765898" stroke-width="0.6"/>
<polygon points="465.6,463.7 465.6,462.0 470.6,488.5 470.6,490.2" fill="#765898" stroke="#765898" stroke-width="0.6"/>
<polygon points="465.8,465.4 465.6,463.7 470.6,490.2 470.8,491.9" fill="#765898" stroke="#765898" stroke-width="0.6"/>
<polygon points="847.6,464.0 853.8,466.4 853.8,493.0 847.6,490.6" fill="#a175ce" stroke="#a175ce" stroke-width="0.6"/>
<polygon points="853.8,466.4 857.2,468.0 857.1,494.6 853.8,493.0" fill="#9a71c6" stroke="#9a71c6" stroke-width="0.6"/>
<polygon points="857.2,468.0 859.6,469.6 859.5,496.2 857.1,494.6" fill="#906ab9" stroke="#906ab9" stroke-width="0.6"/>
<polygon points="859.6,469.6 861.9,471.5 861.8,498.1 859.5,496.2" fill="#8864ae" stroke="#8864ae" stroke-width="0.6"/>
<polygon points="861.9,471.5 864.1,473.6 863.9,500.2 861.8,498.1" fill="#805fa5" stroke="#805fa5" stroke-width="0.6"/>
<polygon points="864.1,473.6 865.9,475.7 865.7,502.3 863.9,500.2" fill="#7b5b9e" stroke="#7b5b9e" stroke-width="0.6"/>
<polygon points="865.9,475.7 867.4,477.9 867.1,504.5 865.7,502.3" fill="#765898" stroke="#765898" stroke-width="0.6"/>
<polygon points="466.8,480.9 470.2,476.5 475.2,503.0 471.8,507.4" fill="#8361a9" stroke="#8361a9" stroke-width="0.6"/>
<polygon points="867.4,477.9 868.5,480.0 868.3,506.6 867.1,504.5" fill="#765898" stroke="#765898" stroke-width="0.6"/>
<polygon points="868.5,480.0 869.3,482.2 869.0,508.8 868.3,506.6" fill="#765898" stroke="#765898" stroke-width="0.6"/>
<polygon points="464.9,483.2 466.8,480.9 471.8,507.4 470.0,509.7" fill="#8462aa" stroke="#8462aa" stroke-width="0.6"/>
<polygon points="869.3,482.2 869.8,484.3 869.6,510.9 869.0,508.8" fill="#765898" stroke="#765898" stroke-width="0.6"/>
<polygon points="463.5,484.9 464.9,483.2 470.0,509.7 468.6,511.4" fill="#8663ac" stroke="#8663ac" stroke-width="0.6"/>
<polygon points="869.8,484.3 870.1,486.5 869.8,513.1 869.6,510.9" fill="#765898" stroke="#765898" stroke-width="0.6"/>
<polygon points="462.2,486.5 463.5,484.9 468.6,511.4 467.3,513.0" fill="#8764ae" stroke="#8764ae" stroke-width="0.6"/>
<polygon points="460.9,487.9 462.2,486.5 467.3,513.0 466.0,514.5" fill="#8965b0" stroke="#8965b0" stroke-width="0.6"/>
<polygon points="870.1,486.5 870.1,488.6 869.8,515.2 869.8,513.1" fill="#765898" stroke="#765898" stroke-width="0.6"/>
<polygon points="459.9,489.5 460.9,487.9 466.0,514.5 465.1,516.0" fill="#7d5da1" stroke="#7d5da1" stroke-width="0.6"/>
<polygon points="459.2,491.1 459.9,489.5 465.1,516.0 464.4,517.7" fill="#765898" stroke="#765898" stroke-width="0.6"/>
<polygon points="458.7,492.8 459.2,491.1 464.4,517.7 463.9,519.4" fill="#765898" stroke="#765898" stroke-width="0.6"/>
<polygon points="458.6,494.7 458.7,492.8 463.9,519.4 463.7,521.2" fill="#765898" stroke="#765898" stroke-width="0.6"/>
<polygon points="458.6,496.5 458.6,494.7 463.7,521.2 463.8,523.0" fill="#765898" stroke="#765898" stroke-width="0.6"/>
<polygon points="458.8,498.3 458.6,496.5 463.8,523.0 463.9,524.9" fill="#765898" stroke="#765898" stroke-width="0.6"/>
<polygon points="865.1,508.0 866.7,510.3 866.5,536.9 864.9,534.7" fill="#775999" stroke="#775999" stroke-width="0.6"/>
<polygon points="866.7,510.3 867.5,511.7 867.3,538.4 866.5,536.9" fill="#765898" stroke="#765898" stroke-width="0.6"/>
<polygon points="867.5,511.7 868.1,513.2 867.8,539.8 867.3,538.4" fill="#765898" stroke="#765898" stroke-width="0.6"/>
<polygon points="868.1,513.2 868.5,514.8 868.3,541.5 867.8,539.8" fill="#765898" stroke="#765898" stroke-width="0.6"/>
<polygon points="868.5,514.8 868.9,516.7 868.6,543.4 868.3,541.5" fill="#765898" stroke="#765898" stroke-width="0.6"/>
<polygon points="868.9,516.7 869.0,518.8 868.8,545.4 868.6,543.4" fill="#765898" stroke="#765898" stroke-width="0.6"/>
<polygon points="480.7,526.3 478.5,514.3 483.5,540.9 485.7,552.9" fill="#765898" stroke="#765898" stroke-width="0.6"/>
<polygon points="475.4,532.8 480.7,526.3 485.7,552.9 480.5,559.4" fill="#8663ad" stroke="#8663ad" stroke-width="0.6"/>
<polygon points="472.8,536.3 475.4,532.8 480.5,559.4 478.0,562.9" fill="#8361a9" stroke="#8361a9" stroke-width="0.6"/>
<polygon points="471.2,538.8 472.8,536.3 478.0,562.9 476.4,565.4" fill="#7e5ea2" stroke="#7e5ea2" stroke-width="0.6"/>
<polygon points="469.9,541.2 471.2,538.8 476.4,565.4 475.1,567.8" fill="#795a9c" stroke="#795a9c" stroke-width="0.6"/>
<polygon points="469.1,543.3 469.9,541.2 475.1,567.8 474.2,570.0" fill="#765898" stroke="#765898" stroke-width="0.6"/>
<polygon points="468.3,545.5 469.1,543.3 474.2,570.0 473.5,572.1" fill="#765898" stroke="#765898" stroke-width="0.6"/>
<polygon points="467.8,547.7 468.3,545.5 473.5,572.1 473.0,574.3" fill="#765898" stroke="#765898" stroke-width="0.6"/>
<polygon points="467.4,549.9 467.8,547.7 473.0,574.3 472.7,576.5" fill="#765898" stroke="#765898" stroke-width="0.6"/>
<polygon points="467.3,552.0 467.4,549.9 472.7,576.5 472.5,578.7" fill="#765898" stroke="#765898" stroke-width="0.6"/>
<polygon points="467.3,554.3 467.3,552.0 472.5,578.7 472.5,580.9" fill="#765898" stroke="#765898" stroke-width="0.6"/>
<polygon points="467.4,556.7 467.3,554.3 472.5,580.9 472.7,583.3" fill="#765898" stroke="#765898" stroke-width="0.6"/>
<polygon points="467.8,559.1 467.4,556.7 472.7,583.3 473.0,585.7" fill="#765898" stroke="#765898" stroke-width="0.6"/>
<polygon points="469.2,589.9 477.6,583.9 482.8,610.6 474.5,616.6" fill="#9f74cc" stroke="#9f74cc" stroke-width="0.6"/>
<polygon points="465.0,593.3 469.2,589.9 474.5,616.6 470.3,619.9" fill="#9c72c8" stroke="#9c72c8" stroke-width="0.6"/>
<polygon points="462.0,595.9 465.0,593.3 470.3,619.9 467.5,622.6" fill="#966ec0" stroke="#966ec0" stroke-width="0.6"/>
<polygon points="459.5,598.6 462.0,595.9 467.5,622.6 465.0,625.3" fill="#8f69b8" stroke="#8f69b8" stroke-width="0.6"/>
<polygon points="457.4,601.3 459.5,598.6 465.0,625.3 462.9,627.9" fill="#8865af" stroke="#8865af" stroke-width="0.6"/>
<polygon points="814.0,599.2 814.2,603.4 814.7,630.1 814.5,625.9" fill="#765898" stroke="#765898" stroke-width="0.6"/>
<polygon points="455.6,604.0 457.4,601.3 462.9,627.9 461.1,630.6" fill="#8260a7" stroke="#8260a7" stroke-width="0.6"/>
<polygon points="454.1,606.6 455.6,604.0 461.1,630.6 459.7,633.3" fill="#7c5c9f" stroke="#7c5c9f" stroke-width="0.6"/>
<polygon points="814.2,603.4 814.5,607.8 815.0,634.5 814.7,630.1" fill="#765898" stroke="#765898" stroke-width="0.6"/>
<polygon points="453.0,609.3 454.1,606.6 459.7,633.3 458.6,635.9" fill="#775899" stroke="#775899" stroke-width="0.6"/>
<polygon points="814.5,607.8 815.1,612.4 815.6,639.1 815.0,634.5" fill="#765898" stroke="#765898" stroke-width="0.6"/>
<polygon points="452.2,611.9 453.0,609.3 458.6,635.9 457.8,638.6" fill="#765898" stroke="#765898" stroke-width="0.6"/>
<polygon points="451.9,614.6 452.2,611.9 457.8,638.6 457.5,641.2" fill="#765898" stroke="#765898" stroke-width="0.6"/>
<polygon points="815.1,612.4 815.8,616.8 816.2,643.6 815.6,639.1" fill="#765898" stroke="#765898" stroke-width="0.6"/>
<polygon points="452.0,617.2 451.9,614.6 457.5,641.2 457.6,643.9" fill="#765898" stroke="#765898" stroke-width="0.6"/>
<polygon points="815.8,616.8 816.3,621.1 816.8,647.8 816.2,643.6" fill="#765898" stroke="#765898" stroke-width="0.6"/>
<polygon points="816.3,621.1 816.9,625.5 817.3,652.2 816.8,647.8" fill="#765898" stroke="#765898" stroke-width="0.6"/>
<polygon points="816.9,625.5 817.3,630.0 817.8,656.7 817.3,652.2" fill="#765898" stroke="#765898" stroke-width="0.6"/>
<polygon points="817.3,630.0 817.7,634.5 818.2,661.2 817.8,656.7" fill="#765898" stroke="#765898" stroke-width="0.6"/>
<polygon points="817.7,634.5 818.0,639.0 818.4,665.7 818.2,661.2" fill="#765898" stroke="#765898" stroke-width="0.6"/>
<polygon points="818.0,639.0 818.1,643.4 818.6,670.1 818.4,665.7" fill="#765898" stroke="#765898" stroke-width="0.6"/>
<polygon points="494.7,654.4 494.7,651.7 499.8,678.4 499.8,681.0" fill="#765898" stroke="#765898" stroke-width="0.6"/>
<polygon points="494.8,657.3 494.7,654.4 499.8,681.0 499.9,684.0" fill="#765898" stroke="#765898" stroke-width="0.6"/>
<polygon points="494.9,660.5 494.8,657.3 499.9,684.0 500.0,687.2" fill="#765898" stroke="#765898" stroke-width="0.6"/>
<polygon points="495.1,664.0 494.9,660.5 500.0,687.2 500.3,690.7" fill="#765898" stroke="#765898" stroke-width="0.6"/>
<polygon points="495.4,667.8 495.1,664.0 500.3,690.7 500.5,694.4" fill="#765898" stroke="#765898" stroke-width="0.6"/>
<polygon points="495.9,671.2 495.4,667.8 500.5,694.4 501.1,697.9" fill="#765898" stroke="#765898" stroke-width="0.6"/>
<polygon points="510.5,716.0 508.1,713.0 506.7,711.0 505.5,709.0 504.2,706.6 502.9,704.0 501.9,701.1 501.1,697.9 500.5,694.4 500.3,690.7 500.0,687.2 499.9,684.0 499.8,681.0 499.8,678.4 499.2,675.9 497.8,673.8 495.8,671.9 493.2,670.3 490.6,668.9 487.9,667.7 485.3,666.7 482.7,665.9 480.2,665.1 477.9,664.3 475.6,663.6 473.5,662.8 471.3,661.8 469.1,660.3 466.7,658.6 464.4,656.4 462.3,654.2 460.6,651.8 459.3,649.2 458.2,646.6 457.6,643.9 457.5,641.2 457.8,638.6 458.6,635.9 459.7,633.3 461.1,630.6 462.9,627.9 465.0,625.3 467.5,622.6 470.3,619.9 474.5,616.6 482.8,610.6 480.1,605.0 478.7,602.0 477.6,599.7 476.6,597.5 475.7,595.3 474.9,593.0 474.2,590.7 473.6,588.3 473.0,585.7 472.7,583.3 472.5,580.9 472.5,578.7 472.7,576.5 473.0,574.3 473.5,572.1 474.2,570.0 475.1,567.8 476.4,565.4 478.0,562.9 480.5,559.4 485.7,552.9 483.5,540.9 480.3,541.1 478.5,541.0 476.9,540.6 475.1,539.9 473.3,539.0 471.7,538.0 470.2,536.7 468.8,535.2 467.5,533.6 466.5,531.9 465.6,530.2 464.9,528.5 464.3,526.7 463.9,524.9 463.8,523.0 463.7,521.2 463.9,519.4 464.4,517.7 465.1,516.0 466.0,514.5 467.3,513.0 468.6,511.4 470.0,509.7 471.8,507.4 475.2,503.0 473.4,499.3 472.5,497.1 471.8,495.4 471.3,493.7 470.8,491.9 470.6,490.2 470.6,488.5 470.8,486.9 471.3,485.3 471.9,483.6 472.8,481.8 473.8,480.0 475.1,478.1 476.4,476.2 477.8,474.5 479.3,472.8 480.9,471.2 482.6,469.7 484.3,468.3 486.1,467.1 488.0,465.9 489.8,464.9 491.6,464.0 493.2,463.3 494.8,462.6 496.4,461.9 497.9,461.2 499.7,460.2 502.9,458.4 504.1,454.8 505.0,452.9 506.0,451.5 507.3,450.1 508.8,448.8 510.4,447.5 512.1,446.3 513.9,445.0 515.8,443.7 517.9,442.6 520.1,441.5 522.5,440.6 525.0,439.8 527.7,439.0 530.5,438.3 533.5,437.6 536.7,437.0 539.7,436.3 542.6,435.8 545.4,435.2 548.0,434.7 551.0,434.6 554.4,434.7 558.2,435.2 562.4,436.0 566.9,436.6 571.6,437.0 576.6,437.2 581.9,437.2 586.8,437.5 591.3,438.2 595.4,439.2 599.0,440.6 602.1,442.1 604.6,443.9 606.6,445.8 607.9,447.9 608.9,450.1 609.6,452.2 609.9,454.9 609.9,459.7 612.2,454.5 613.9,451.8 615.8,450.0 618.1,448.4 620.8,447.0 623.5,445.9 626.3,445.2 629.0,444.7 631.7,444.6 634.3,444.7 636.9,445.1 639.5,445.7 641.9,446.6 644.5,447.7 647.2,449.1 650.0,450.8 652.9,452.6 655.9,454.9 659.2,457.4 662.7,460.3 666.4,463.5 669.8,466.6 673.0,469.5 676.5,473.0 682.5,479.0 693.2,475.4 698.9,473.4 703.4,471.8 707.8,470.2 712.0,468.5 716.2,467.1 720.4,465.7 724.6,464.5 728.9,463.5 732.9,462.6 736.9,462.0 741.6,461.6 749.9,461.3 750.7,460.7 751.5,459.6 752.7,458.8 754.2,458.2 756.2,457.6 758.6,457.2 761.5,456.8 764.9,456.6 768.7,456.5 772.6,456.6 776.6,456.8 780.7,457.2 784.9,457.7 788.5,458.3 791.7,458.9 794.3,459.6 796.5,460.4 798.3,461.2 799.7,462.2 801.0,463.5 802.8,466.0 810.5,466.6 815.1,467.2 819.2,468.0 823.6,469.1 828.3,470.4 832.4,471.8 835.8,473.2 838.5,474.5 840.5,475.9 842.3,477.3 843.8,478.7 845.0,480.1 845.9,481.5 846.6,483.0 847.1,484.5 847.4,486.6 847.6,490.6 853.8,493.0 857.1,494.6 859.5,496.2 861.8,498.1 863.9,500.2 865.7,502.3 867.1,504.5 868.3,506.6 869.0,508.8 869.6,510.9 869.8,513.1 869.8,515.2 869.5,517.3 869.2,519.5 868.8,521.6 868.4,523.8 867.8,525.9 867.3,527.9 866.8,529.6 866.1,531.6 864.9,534.7 866.5,536.9 867.3,538.4 867.8,539.8 868.3,541.5 868.6,543.4 868.8,545.4 868.7,547.7 868.2,550.9 867.1,556.9 863.4,557.4 861.3,558.4 858.8,559.7 856.3,561.1 853.7,562.6 851.0,564.3 848.2,566.0 845.6,567.8 842.9,569.7 840.4,571.5 838.0,573.4 835.6,575.4 833.3,577.4 830.6,579.8 827.7,583.0 825.2,586.4 822.9,589.9 820.6,593.8 818.7,598.0 817.2,602.3 816.1,606.6 815.5,610.7 815.0,614.4 814.7,618.2 814.5,622.0 814.5,625.9 814.7,630.1 815.0,634.5 815.6,639.1 816.2,643.6 816.8,647.8 817.3,652.2 817.8,656.7 818.2,661.2 818.4,665.7 818.6,670.1 818.5,674.5 818.4,678.7 818.1,682.2 817.7,684.9 817.4,686.3 816.3,686.9 813.5,688.3 810.5,689.6 807.3,690.9 803.9,692.2 800.2,693.5 796.3,694.7 792.0,695.9 787.4,697.0 782.8,698.0 778.2,698.9 773.6,699.7 768.6,700.5 763.0,701.4 757.4,702.4 751.9,703.5 746.7,704.6 742.7,705.3 739.5,705.9 737.4,706.1 735.0,706.3 731.0,706.8 726.6,707.5 721.7,708.2 716.7,709.1 712.2,709.7 707.8,710.2 703.5,710.5 699.2,710.8 695.6,710.8 692.7,710.7 690.5,710.5 687.3,710.0 682.4,709.5 676.4,709.5 666.6,711.4 660.4,715.6 658.1,717.5 655.6,719.6 652.5,722.2 649.4,724.8 646.7,726.9 643.6,728.9 640.0,730.9 636.3,732.7 633.0,734.1 629.9,735.1 626.9,735.8 624.0,736.3 621.0,736.5 617.9,736.5 614.7,736.3 610.9,735.7 606.8,734.9 602.9,733.9 599.0,732.8 596.3,731.9 595.0,731.3 594.6,730.9 593.4,729.6 583.6,713.3 560.0,715.4 554.2,716.0 549.1,716.7 543.8,717.4 539.1,718.1 535.3,718.5 531.5,718.7 527.7,718.7 524.2,718.5 521.3,718.1 518.7,717.5 516.3,716.7 514.3,715.9 513.0,715.1" fill="#cd90fc"/>
<path d="M477.6,583.9L482.8,610.6" stroke="#7a5c9e" stroke-width="1.6" opacity="0.8"/>
<path d="M480.7,526.3L485.7,552.9" stroke="#7a5c9e" stroke-width="1.6" opacity="0.8"/>
<path d="M478.5,514.3L483.5,540.9" stroke="#7a5c9e" stroke-width="1.6" opacity="0.8"/>
<path d="M470.2,476.5L475.2,503.0" stroke="#7a5c9e" stroke-width="1.6" opacity="0.8"/>
<path d="M498.4,432.0L502.9,458.4" stroke="#7a5c9e" stroke-width="1.6" opacity="0.8"/>
<path d="M606.8,433.2L609.9,459.7" stroke="#7a5c9e" stroke-width="1.6" opacity="0.8"/>
<path d="M680.3,452.5L682.5,479.0" stroke="#7a5c9e" stroke-width="1.6" opacity="0.8"/>
<path d="M748.6,436.3L749.9,462.8" stroke="#7a5c9e" stroke-width="1.6" opacity="0.8"/>
<path d="M802.2,439.5L802.8,466.0" stroke="#7a5c9e" stroke-width="1.6" opacity="0.8"/>
<path d="M847.6,464.0L847.6,490.6" stroke="#7a5c9e" stroke-width="1.6" opacity="0.8"/>
<path d="M865.1,508.0L864.9,534.7" stroke="#7a5c9e" stroke-width="1.6" opacity="0.8"/>
</g>
<defs><linearGradient id="gLR" x1="0" y1="0" x2="1" y2="0"><stop offset="0" stop-color="#7e5ea3"/><stop offset="1" stop-color="#b582e6"/></linearGradient><linearGradient id="gRL" x1="0" y1="0" x2="1" y2="0"><stop offset="0" stop-color="#b582e6"/><stop offset="1" stop-color="#7e5ea3"/></linearGradient><linearGradient id="gMid" x1="0" y1="0" x2="1" y2="0"><stop offset="0" stop-color="#8a66b0"/><stop offset="0.5" stop-color="#b07fe0"/><stop offset="1" stop-color="#8a66b0"/></linearGradient></defs>
<polygon points="577.6,373.9 635.9,379.4 635.9,386.6 582.3,381.1" fill="#b582e6" />
<polygon points="563.7,402.7 577.6,373.9 582.6,380.5 575.4,391.6 568.7,406.6" fill="#8a66b0" />
<polygon points="650.0,382.4 651.9,382.0 654.1,411.3 641.9,404.0" fill="#7c5da0" />
<polygon points="487.4,476.2 492.7,480.4 492.7,490.1 488.8,487.3" fill="#7e5ea3" />
<polygon points="479.7,508.2 490.1,511.1 500.3,517.9 502.4,529.2 503.1,543.7 494.5,540.8 485.8,535.0 482.2,526.3" fill="url(#gLR)" />
<polygon points="461.2,482.9 458.6,491.6 458.6,498.8 461.2,506.0 467.0,512.1 474.2,514.7 478.8,514.2 479.3,508.2 477.1,501.7 475.7,494.5 474.9,488.7 473.5,482.9" fill="url(#gLR)" />
<polygon points="480.7,527.0 471.3,537.9 467.7,546.6 467.0,555.3 469.1,565.4 472.8,574.1 475.7,583.5 478.8,577.0 482.9,566.8 488.7,566.1 487.2,558.1 484.3,543.7 481.4,530.7" fill="url(#gLR)" />
<path d="M479.3,508 L487,540 L494,590" stroke="#5f4880" stroke-width="1" fill="none"/>
<polygon points="474.3,626.1 484.3,636.9 498.8,638.8 511.4,646.0 518.7,656.8 519.6,671.3 515.0,664.1 502.4,651.4 489.7,644.2 476.1,640.6" fill="url(#gMid)" />
<polygon points="495.1,656.8 499.7,667.7 505.1,689.4 498.8,682.2 495.1,671.3" fill="#6d5290" />
<polygon points="811.5,605.6 819.2,617.1 823.0,636.4 821.1,653.8 814.4,642.2 811.5,624.9" fill="#7e5ea3" />
<polygon points="790.3,621.0 806.6,574.7 807.6,595.9 798.9,625.8" fill="#6d5290" />
<polyline points="815.0,592.2 806.5,638.8 803.7,663.8 784.3,674.9 752.1,683.4 730.8,681.3 724.4,678.1 709.4,685.6 688.1,684.5 666.7,686.6 649.6,696.2 634.7,705.8 624.0,702.6 602.7,693.0 581.3,686.6 560.0,688.8 538.6,692.5 524.1,691.6 519.6,688.0" fill="none" stroke="#9a70c6" stroke-width="4.4" stroke-linejoin="round"/>
<clipPath id="plc"><polygon points="503.2,541.5 500.5,516.5 492.7,488.7 488.0,476.2 503.2,466.5 522.7,461.0 531.0,444.3 553.2,438.8 575.4,433.2 592.0,431.9 614.2,441.6 636.4,452.7 655.8,466.5 681.6,482.7 700.0,478.0 723.2,471.6 756.5,460.5 770.4,463.2 795.4,471.6 828.7,474.3 845.3,491.0 853.6,510.4 845.3,524.3 853.6,538.2 850.9,557.6 831.5,568.7 815.0,590.0 806.5,636.6 803.7,661.6 784.3,672.7 752.1,681.2 730.8,679.1 724.4,675.9 709.4,683.4 688.1,682.3 666.7,684.4 649.6,694.0 634.7,703.6 624.0,700.4 602.7,690.8 581.3,684.4 560.0,686.6 538.6,690.3 524.1,689.4 519.6,685.8 519.6,671.3 512.0,655.0 505.0,640.0 503.0,600.0"/></clipPath>
<polygon points="503.2,541.5 500.5,516.5 492.7,488.7 488.0,476.2 503.2,466.5 522.7,461.0 531.0,444.3 553.2,438.8 575.4,433.2 592.0,431.9 614.2,441.6 636.4,452.7 655.8,466.5 681.6,482.7 700.0,478.0 723.2,471.6 756.5,460.5 770.4,463.2 795.4,471.6 828.7,474.3 845.3,491.0 853.6,510.4 845.3,524.3 853.6,538.2 850.9,557.6 831.5,568.7 815.0,590.0 806.5,636.6 803.7,661.6 784.3,672.7 752.1,681.2 730.8,679.1 724.4,675.9 709.4,683.4 688.1,682.3 666.7,684.4 649.6,694.0 634.7,703.6 624.0,700.4 602.7,690.8 581.3,684.4 560.0,686.6 538.6,690.3 524.1,689.4 519.6,685.8 519.6,671.3 512.0,655.0 505.0,640.0 503.0,600.0" fill="none" stroke="#b27fe2" stroke-width="1"/>
<g clip-path="url(#plc)">
<path d="M571.1,483.3L634.9,507.9M567.8,485.5L597.3,533.9M562.4,486.1L532.5,543.9M559.5,484.9L492.4,532.3M557.7,481.6L480.7,487.6M559.0,478.6L496.1,453.8M562.1,476.6L530.1,427.6M567.4,475.9L594.7,417.3M570.5,477.1L630.7,433.9M572.3,480.3L652.4,472.6M776.7,512.1L846.9,533.9M774.4,514.2L826.4,564.0M769.3,515.4L761.2,579.3M765.2,514.3L705.7,567.9M762.8,511.6L677.2,530.5M763.0,508.4L688.9,491.7M766.4,505.5L728.6,457.1M771.1,504.7L783.5,445.8M774.6,505.6L820.4,462.0M777.2,508.5L856.6,492.2M634.7,596.4L782.1,643.5M629.2,601.3L724.4,709.2M622.6,603.5L639.7,731.1M612.8,602.6L507.8,739.1M608.4,600.0L457.1,695.6M605.5,594.5L440.3,621.7M607.0,588.1L461.0,547.5M612.2,583.2L520.9,492.8M620.3,580.5L613.6,463.5M627.2,580.9L687.9,471.9M633.3,584.0L771.9,494.0M636.5,589.7L821.0,562.2" fill="none" stroke="#9a70c8" stroke-width="1" opacity="0.32"/>
<path d="M585.4,488.9Q576.2,489.7 574.3,496.3M556.2,498.1Q554.8,492.2 546.3,494.2M555.3,466.2Q564.3,468.7 572.9,464.1M572.9,464.1Q574.8,469.8 583.3,467.9M589.6,478.6Q582.0,483.1 585.4,488.9M603.3,495.7Q585.9,497.3 582.5,509.7M582.5,509.7Q565.3,504.5 548.3,513.2M548.3,513.2Q545.9,502.0 529.9,505.8M547.1,453.6Q563.7,458.3 579.6,449.7M579.6,449.7Q583.1,460.2 598.9,456.7M598.9,456.7Q595.7,469.9 610.8,476.6M610.8,476.6Q596.7,484.8 603.3,495.7M620.3,502.3Q595.3,504.5 590.4,522.6M540.8,527.8Q537.3,511.5 514.1,516.9M514.1,516.9Q519.8,496.7 498.7,486.2M511.4,459.8Q535.3,458.3 539.4,441.8M539.4,441.8Q563.2,448.4 585.9,436.3M585.9,436.3Q591.0,451.2 613.5,446.3M613.5,446.3Q609.1,465.1 631.0,474.7M636.9,508.7Q604.4,511.6 598.2,535.3M533.4,542.1Q528.9,520.7 498.7,527.8M498.7,527.8Q506.3,501.4 479.0,487.8M495.8,453.7Q526.7,451.7 532.1,430.5M591.8,423.5Q598.5,442.6 627.5,436.2M627.5,436.2Q622.0,460.4 650.4,472.8M650.4,472.8Q624.3,488.2 636.9,508.7M753.9,524.5Q754.8,517.5 745.8,515.4M758.1,494.8Q766.9,497.4 773.7,492.3M773.7,492.3Q777.1,497.9 785.3,495.4M794.2,505.0Q787.8,510.8 792.5,517.0M812.2,523.1Q795.9,524.7 797.7,536.6M797.7,536.6Q779.0,533.3 765.7,544.2M765.7,544.2Q757.0,533.1 739.7,537.3M739.7,537.3Q741.5,524.0 724.7,520.0M726.6,500.2Q744.8,495.3 748.0,481.8M748.0,481.8Q764.2,486.7 776.9,477.2M776.9,477.2Q783.2,487.6 798.3,483.0M798.3,483.0Q798.0,496.1 815.0,500.7M726.1,549.5Q728.8,530.3 704.6,524.5M704.6,524.5Q721.9,510.0 707.6,495.9M779.9,463.1Q788.8,477.9 810.5,471.3M810.5,471.3Q810.2,490.0 834.7,496.7M834.7,496.7Q818.0,512.1 831.0,529.0M849.3,534.7Q818.7,537.6 822.4,560.2M822.4,560.2Q787.0,553.9 761.8,575.0M761.8,575.0Q745.4,553.6 712.8,561.5M712.8,561.5Q716.4,536.4 685.1,528.8M685.1,528.8Q707.6,510.1 689.3,491.8M729.5,458.2Q759.4,467.0 782.7,449.7M782.7,449.7Q794.3,468.7 822.2,460.2M822.2,460.2Q821.9,484.2 853.7,492.8M853.7,492.8Q832.2,512.7 849.3,534.7M649.7,601.2Q638.1,602.7 638.2,611.5M638.2,611.5Q628.5,608.1 624.3,616.2M594.6,608.7Q599.1,600.2 588.6,597.3M591.9,583.9Q603.3,582.2 602.6,573.8M633.8,568.9Q635.4,577.2 646.7,575.3M646.7,575.3Q642.7,583.9 653.3,587.2M674.9,609.2Q653.1,612.0 653.4,628.7M627.2,637.7Q611.1,625.2 588.5,634.2M588.5,634.2Q591.0,618.8 571.4,623.4M571.4,623.4Q580.0,607.3 560.5,601.9M560.5,601.9Q578.1,590.0 566.9,576.9M587.0,558.3Q607.3,562.7 618.5,548.0M644.7,549.4Q647.6,564.5 668.5,561.1M668.5,561.1Q661.4,577.0 681.1,583.1M681.1,583.1Q663.8,595.0 674.9,609.2M698.9,616.9Q667.4,620.9 668.1,645.3M630.0,658.6Q606.6,640.2 573.8,653.4M573.8,653.4Q577.5,630.9 549.0,637.5M549.0,637.5Q561.8,614.1 533.6,606.3M533.6,606.3Q559.2,589.1 543.4,570.4M543.4,570.4Q573.9,565.8 572.4,543.8M572.4,543.8Q601.3,550.1 617.4,529.2M654.8,531.3Q659.1,552.7 689.0,547.9M689.0,547.9Q679.0,570.5 707.4,579.1M559.2,672.3Q564.4,642.7 527.0,651.4M527.0,651.4Q544.0,620.8 507.6,610.6M507.6,610.6Q541.0,588.3 520.8,564.1M520.8,564.1Q560.2,558.2 558.5,530.1M558.5,530.1Q595.7,538.0 616.4,511.5M616.4,511.5Q635.5,532.8 664.4,514.1M664.4,514.1Q670.0,541.4 708.4,535.2M635.5,699.7Q597.8,669.5 544.8,691.1M544.8,691.1Q551.3,654.4 505.3,665.2M505.3,665.2Q526.6,627.3 482.1,614.8M482.1,614.8Q523.3,587.5 498.9,558.0M498.9,558.0Q547.0,550.9 545.2,516.9M545.2,516.9Q590.3,526.5 615.4,494.5M673.5,497.6Q680.6,530.5 727.2,523.0M727.2,523.0Q712.2,558.1 757.3,571.7M757.3,571.7Q718.9,599.0 745.4,631.8M768.2,639.1Q708.8,646.8 711.1,694.1M711.1,694.1Q660.2,675.7 638.3,720.3M530.3,709.9Q538.4,665.9 483.7,678.8M483.7,678.8Q509.4,633.7 457.0,618.9M457.0,618.9Q505.9,586.7 477.6,552.1M477.6,552.1Q534.1,543.8 532.3,504.1M532.3,504.1Q585.0,515.3 614.5,478.2M614.5,478.2Q641.6,507.9 682.4,481.8M682.4,481.8Q690.8,519.9 745.3,511.3M745.3,511.3Q728.1,552.2 781.3,568.1M641.1,740.9Q589.1,698.5 515.9,728.7M515.9,728.7Q525.6,677.4 462.2,692.4M432.2,623.0Q488.8,585.9 456.8,546.3M456.8,546.3Q521.6,536.8 519.8,491.8M519.8,491.8Q579.9,504.4 613.6,462.4M613.6,462.4Q644.5,496.0 690.9,466.5M690.9,466.5Q700.7,509.7 762.9,499.8" fill="none" stroke="#9468c2" stroke-width="1.45" stroke-linecap="round" opacity="0.66"/>
<path d="M612,455Q620,445 629,456M620,481Q628,471 637,482M597,503Q605,493 614,504M660,519Q668,509 677,520M704,523Q712,513 721,524M682,503Q690,493 699,504M692,551Q700,541 709,552M727,493Q735,483 744,494M642,503Q650,493 659,504" fill="none" stroke="#9f74cc" stroke-width="1.2"/>
<path d="M652,602 Q700,640 722,688 M668,592 Q730,620 768,668 M602,642 Q650,660 690,690 M562,652 Q600,668 640,700 M682,577 Q750,590 792,640 M530,600 Q560,640 600,668 M520,560 Q535,600 560,630" fill="none" stroke="#a176d0" stroke-width="1.3" opacity="0.8"/>
<path d="M575,532 Q620,545 700,530 Q760,545 800,560 M585,540 Q640,552 700,538" fill="none" stroke="#a477d2" stroke-width="1.4"/>
</g>
<polygon points="852.3,491.0 870.3,502.1 870.9,535.4 862.0,540.9 854.2,527.1 850.9,504.9" fill="url(#gLR)" />
<polygon points="843.9,502.1 853.7,513.2 852.3,527.1 845.3,518.7" fill="#8a66b0" />
<polygon points="848.1,529.8 854.2,535.4 853.7,557.6 848.7,546.5" fill="#8a66b0" />
<polygon points="831.5,542.3 853.7,535.4 855.0,557.6 834.2,571.5" fill="url(#gMid)" />
<path d="M790.4,559.2 L769,631.8 M741,580 Q742,598 762,613" stroke="#6a5090" stroke-width="1" fill="none"/>
<path d="M735,645 Q745,640 752,647 M739,655 Q748,650 753,652 M743,664 Q750,657 755,656 M771,640 Q778,634 784,634 M773,647 Q782,644 788,647 M771,655 Q779,655 784,660 M752,640 L758,634 L768,632" stroke="#7a5a9e" stroke-width="1.1" fill="none"/>
<polygon points="597.1,702.3 606.7,710.8 619.5,714.0 632.3,711.9 645.1,703.4 657.9,690.6 666.5,684.2 662.2,689.5 649.4,701.2 636.6,711.9 623.8,716.4 611.0,716.4 600.3,711.9" fill="url(#gLR)" />
<path d="M631.5,430 L646.3,545" stroke="#2a78f0" stroke-width="2"/>
<path d="M659,559.8 L822,585.4" stroke="#e0202a" stroke-width="2"/>
<path d="M642.5,570 L592,692" stroke="#24a044" stroke-width="2"/>
<polygon points="622.1,405.1 642,407.4 643.9,420.2 638.1,435.6 618.3,432.4 616.4,418.3" fill="#1b6fe9" stroke="#1b6fe9" stroke-width="1" stroke-linejoin="round"/>
<polygon points="824,573.2 842.9,575.7 842.9,590.1 839.4,602.1 820.5,598.8 820.5,586.3" fill="#d81f28" stroke="#d81f28" stroke-width="1" stroke-linejoin="round"/>
<polygon points="578,691.5 597.2,693.6 598.9,705.4 592.9,722.5 573.7,719.3 571.1,706.4" fill="#249f45" stroke="#249f45" stroke-width="1" stroke-linejoin="round"/>
<polygon points="641.8,544 659,546.4 660.2,557.5 654.1,572.2 636.9,569.7 635,557.5" fill="#ffffff" stroke="#ffffff" stroke-width="1" stroke-linejoin="round"/>
</g>
</svg>
<div id="stl">
<svg width="91" height="98" viewBox="0 0 91 98">
<path d="M16,0 H51.3 V22.5 Q51.3,31 60,31 H82 V86 Q82,93 75,93 H14 Q7,93 7,86 V42 H32 Q40,42 40,34 V16 Q40,9 32,9 H7 Q8,2 16,0Z" fill="#3f48cc"/>
<path d="M56.4,1.2 L81.2,26 H62.5 Q56.4,26 56.4,20Z" fill="#3f48cc"/>
<path d="M0,14 H33 Q37,14 37,18 V34 Q37,38 33,38 H0Z" fill="#3f48cc"/>
<rect x="20" y="47" width="49" height="4.5" fill="#fff"/>
<rect x="20" y="62" width="49" height="4.5" fill="#fff"/>
<rect x="20" y="76" width="49" height="4.5" fill="#fff"/>
<text x="1.5" y="31" font-family="Liberation Sans,sans-serif" font-weight="bold" font-size="13.5" fill="#fff">STL</text>
</svg>
</div>
<div id="panel">
 <div class="lbl" style="top:24px;color:#e03030">X</div>
 <div class="lbl" style="top:65.7px;color:#30b040">Y</div>
 <div class="lbl" style="top:107px;color:#2878e8">Z</div>
 <div class="fld" style="left:33px;top:15.3px;width:179px;border-bottom-color:#a9a9a9"><span class="v">112.0051</span><span class="u">mm</span></div>
 <div class="fld" style="left:33px;top:56.5px;width:179px"><span class="v">113.7946</span><span class="u">mm</span></div>
 <div class="fld" style="left:33px;top:97.9px;width:179px"><span class="v">16</span><span class="u">mm</span></div>
 <div class="fld" style="left:220px;top:15.3px;width:179px;border-bottom-color:#a9a9a9"><span class="v">100</span><span class="u">%</span></div>
 <div class="fld" style="left:220px;top:56.5px;width:179px"><span class="v">100</span><span class="u">%</span></div>
 <div class="fld" style="left:220px;top:97.9px;width:179px"><span class="v">100</span><span class="u">%</span></div>
 <div class="cb" style="left:113px;top:150px"></div>
 <div class="cbl" style="left:142.3px;top:153.4px">Snap Scaling</div>
 <div class="cb" style="left:113px;top:187px"><svg width="19" height="19" viewBox="0 0 19 19"><path d="M5.6,9.2 L8.4,12 L13.6,7.4" stroke="#191919" stroke-width="2.4" fill="none"/></svg></div>
 <div class="cbl" style="left:142.3px;top:190.6px;letter-spacing:0.12px">Uniform Scaling</div>
 <svg style="position:absolute;left:49px;top:165.4px" width="34" height="34" viewBox="0 0 34 34"><path d="M7.4,6.9 L16.7,6.9 A10,10 0 1 1 6.7,16.9" stroke="#10103c" stroke-width="2.2" fill="none"/><path d="M14.6,2.2 L7.4,6.9 L14.6,11.6" stroke="#10103c" stroke-width="2.2" fill="none" stroke-linejoin="miter"/></svg>
</div>
<svg id="arrow" viewBox="0 0 15 26"><path d="M15,0 L1.4,13 L15,26" fill="#fff" stroke="#c5c5c5" stroke-width="1"/></svg>
<svg style="position:absolute;left:14px;top:680px" width="16" height="14" viewBox="0 0 16 14"><path d="M2.5,10 L8,4.5 L13.5,10" stroke="#5c5c5c" stroke-width="1.4" fill="none"/></svg>
<div class="ol" style="left:47px;top:680.2px">Object list</div>
<svg style="position:absolute;left:14px;top:712px" width="24" height="24" viewBox="0 0 24 24"><path d="M3,19.5 H21" stroke="#5c5c5c" stroke-width="1.6"/><path d="M4,16 L5,12.5 L16,4 L19,7.5 L8,15.5Z" fill="#5c5c5c"/></svg>
<div class="ol" style="left:55.5px;top:717.1px;letter-spacing:-0.75px">STL1249</div>
<div class="ol" style="left:14.4px;top:750.1px;letter-spacing:-0.15px">112.0 x 113.8 x 16.0 mm</div>
<svg style="position:absolute;left:14px;top:784px" width="200" height="34" viewBox="0 0 200 34" fill="none" stroke="#686868" stroke-width="2.7" stroke-linejoin="round" stroke-linecap="round">
<path d="M16.7,3.9 L28.6,10.5 V23.3 L16.7,30.1 L4.8,23.3 V10.5Z M16.7,17 L4.8,10.5 M16.7,17 L28.6,10.5 M16.7,17 V30.1"/>
<path d="M45.7,12.3 H61.1 V28.1 H45.7Z" fill="#686868"/><path d="M45.7,12.3 L52.7,5.7 H68.1 L61.1,12.3 M68.1,5.7 V21.5 L61.1,28.1"/>
<path d="M85.2,12.3 L92.2,5.7 H107.6 L100.6,12.3Z" fill="#686868"/><path d="M85.2,12.3 H100.6 V28.1 H85.2Z M107.6,5.7 V21.5 L100.6,28.1"/>
<path d="M132.2,12.3 L125.2,5.7 V21.5 L132.2,28.1Z" fill="#686868"/><path d="M132.2,12.3 H147.6 V28.1 H132.2Z M125.2,5.7 H140.6 L147.6,12.3"/>
<path d="M180.6,12.3 L187.6,5.7 V21.5 L180.6,28.1Z" fill="#686868"/><path d="M165.2,12.3 H180.6 V28.1 H165.2Z M165.2,12.3 L172.2,5.7 H187.6"/>
</svg>
</body></html>
